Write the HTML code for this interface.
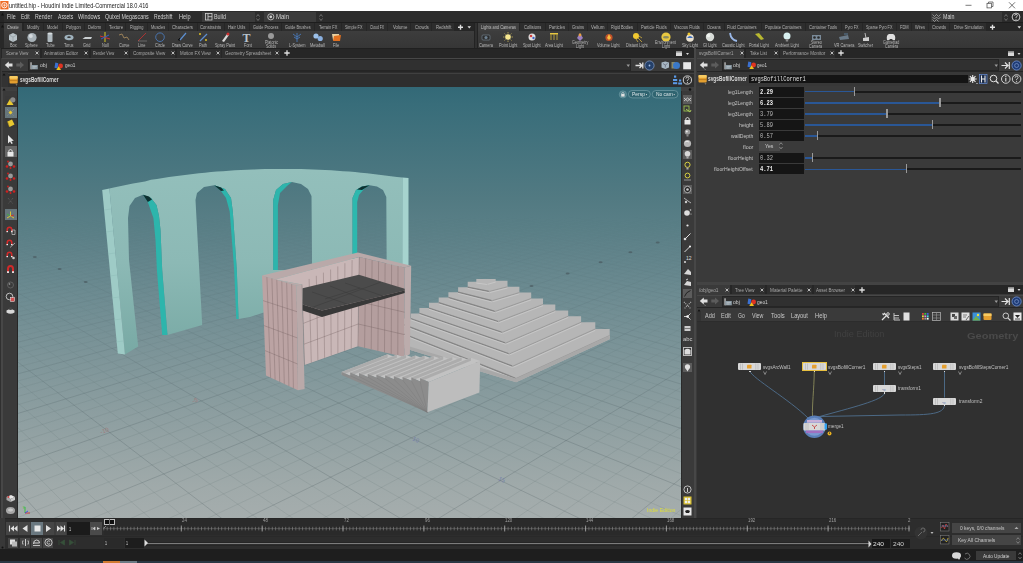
<!DOCTYPE html><html><head><meta charset="utf-8"><style>
*{margin:0;padding:0;box-sizing:border-box}
html,body{width:1023px;height:563px;overflow:hidden;background:#3a3a3a;font-family:"Liberation Sans",sans-serif}
.b{position:absolute}
.t{position:absolute;white-space:nowrap;line-height:1;transform-origin:0 0}
svg{position:absolute;overflow:visible}
</style></head><body><div class="b" style="left:0px;top:0px;width:1023px;height:11px;background:#ffffff;"></div><svg style="left:0px;top:0px" width="12" height="11" viewBox="0 0 12 11"><rect x="0.3" y="1" width="8.2" height="8.4" fill="#ef6a22"/><circle cx="4.4" cy="5.2" r="2.7" fill="none" stroke="#fff" stroke-width="0.9"/><path d="M2.5 5.2 H6.3 M4.4 3.3 V7" stroke="#fff" stroke-width="0.6"/></svg><div class="t" style="left:9.40px;top:2.90px;font-size:6.5px;font-family:'Liberation Sans',sans-serif;font-weight:normal;color:#202020;transform:scaleX(0.861);">untitled.hip - Houdini Indie Limited-Commercial 18.0.416</div><svg style="left:960px;top:0px" width="63" height="11" viewBox="0 0 63 11"><line x1="5.5" y1="5.3" x2="11.5" y2="5.3" stroke="#444" stroke-width="0.7"/><rect x="27" y="3.3" width="4.6" height="4.6" fill="none" stroke="#444" stroke-width="0.7"/><path d="M28.5 3.3 V2 H33 V6.5 H31.6" fill="none" stroke="#444" stroke-width="0.7"/><path d="M49 2.3 L55 8.3 M55 2.3 L49 8.3" stroke="#444" stroke-width="0.75"/></svg><div class="b" style="left:0px;top:11px;width:1023px;height:12px;background:#2c2c2c;"></div><div class="b" style="left:0px;top:11px;width:4px;height:12px;background:#262626;"></div><svg style="left:1px;top:13px" width="3" height="3" viewBox="0 0 3 3"><path d="M0 2.5 L1.5 0 L3 2.5Z" fill="#111"/></svg><div class="t" style="left:7.00px;top:13.57px;font-size:6.3px;font-family:'Liberation Sans',sans-serif;font-weight:normal;color:#d0d0d0;transform:scaleX(0.847);">File</div><div class="t" style="left:21.10px;top:13.57px;font-size:6.3px;font-family:'Liberation Sans',sans-serif;font-weight:normal;color:#d0d0d0;transform:scaleX(0.792);">Edit</div><div class="t" style="left:35.20px;top:13.57px;font-size:6.3px;font-family:'Liberation Sans',sans-serif;font-weight:normal;color:#d0d0d0;transform:scaleX(0.832);">Render</div><div class="t" style="left:57.60px;top:13.57px;font-size:6.3px;font-family:'Liberation Sans',sans-serif;font-weight:normal;color:#d0d0d0;transform:scaleX(0.804);">Assets</div><div class="t" style="left:77.90px;top:13.57px;font-size:6.3px;font-family:'Liberation Sans',sans-serif;font-weight:normal;color:#d0d0d0;transform:scaleX(0.873);">Windows</div><div class="t" style="left:104.90px;top:13.57px;font-size:6.3px;font-family:'Liberation Sans',sans-serif;font-weight:normal;color:#d0d0d0;transform:scaleX(0.845);">Quixel Megascans</div><div class="t" style="left:153.50px;top:13.57px;font-size:6.3px;font-family:'Liberation Sans',sans-serif;font-weight:normal;color:#d0d0d0;transform:scaleX(0.801);">Redshift</div><div class="t" style="left:178.50px;top:13.57px;font-size:6.3px;font-family:'Liberation Sans',sans-serif;font-weight:normal;color:#d0d0d0;transform:scaleX(0.888);">Help</div><div class="b" style="left:202px;top:11.6px;width:53px;height:10px;background:#3b3b3b;"></div><svg style="left:204.5px;top:13.3px" width="8" height="8" viewBox="0 0 8 8"><rect x="0.5" y="0.5" width="6.5" height="6.5" fill="none" stroke="#d0d0d0" stroke-width="0.8"/><line x1="3" y1="0.5" x2="3" y2="7" stroke="#d0d0d0" stroke-width="0.8"/><line x1="3" y1="3.7" x2="7" y2="3.7" stroke="#d0d0d0" stroke-width="0.8"/></svg><div class="t" style="left:214.00px;top:13.94px;font-size:6.8px;font-family:'Liberation Sans',sans-serif;font-weight:normal;color:#d0d0d0;transform:scaleX(0.794);">Build</div><svg style="left:255.5px;top:13.5px" width="4" height="7" viewBox="0 0 4 7"><path d="M0.5 2.5 L2 0.5 L3.5 2.5 M0.5 4.5 L2 6.5 L3.5 4.5" stroke="#888" stroke-width="0.7" fill="none"/></svg><div class="b" style="left:264.3px;top:11.6px;width:52px;height:10px;background:#3b3b3b;"></div><svg style="left:267.3px;top:13.3px" width="8" height="8" viewBox="0 0 8 8"><circle cx="3.8" cy="3.8" r="3.1" fill="none" stroke="#d0d0d0" stroke-width="0.8"/><circle cx="3.8" cy="3.8" r="1.4" fill="#d0d0d0"/></svg><div class="t" style="left:276.00px;top:13.94px;font-size:6.8px;font-family:'Liberation Sans',sans-serif;font-weight:normal;color:#d0d0d0;transform:scaleX(0.882);">Main</div><svg style="left:318.5px;top:13.5px" width="4" height="7" viewBox="0 0 4 7"><path d="M0.5 2.5 L2 0.5 L3.5 2.5 M0.5 4.5 L2 6.5 L3.5 4.5" stroke="#888" stroke-width="0.7" fill="none"/></svg><div class="b" style="left:930.7px;top:11.6px;width:71px;height:10px;background:#3b3b3b;"></div><svg style="left:932px;top:12.5px" width="9" height="9" viewBox="0 0 9 9"><path d="M0.5 1.5 L2.5 3.5 L4.5 1.5 L6.5 3.5 L8.5 1.5 M0.5 4 L2.5 6 L4.5 4 L6.5 6 L8.5 4 M0.5 6.5 L2.5 8.5 L4.5 6.5 L6.5 8.5" stroke="#c8c8c8" stroke-width="0.6" fill="none"/></svg><div class="t" style="left:942.50px;top:13.94px;font-size:6.8px;font-family:'Liberation Sans',sans-serif;font-weight:normal;color:#d0d0d0;transform:scaleX(0.780);">Main</div><svg style="left:1004px;top:13.5px" width="4" height="7" viewBox="0 0 4 7"><path d="M0.5 2.5 L2 0.5 L3.5 2.5 M0.5 4.5 L2 6.5 L3.5 4.5" stroke="#888" stroke-width="0.7" fill="none"/></svg><svg style="left:1011px;top:12px" width="11" height="10" viewBox="0 0 11 10"><circle cx="5" cy="5" r="3.9" fill="#2a2a2a" stroke="#d8d8d8" stroke-width="0.9"/><path d="M3.6 3.8 Q3.7 2.4 5 2.4 Q6.4 2.4 6.4 3.7 Q6.4 4.6 5 5.2 V6.2" stroke="#d8d8d8" stroke-width="0.8" fill="none"/><circle cx="5" cy="7.4" r="0.5" fill="#d8d8d8"/></svg><div class="b" style="left:0px;top:22px;width:1023px;height:1px;background:#1d1d1d;"></div><div class="b" style="left:0px;top:23px;width:1023px;height:8px;background:#262626;"></div><div class="b" style="left:0px;top:23px;width:4px;height:25px;background:#282828;"></div><svg style="left:1px;top:24.5px" width="3" height="3" viewBox="0 0 3 3"><path d="M0 2.5 L1.5 0 L3 2.5Z" fill="#111"/></svg><div class="b" style="left:4.4px;top:23.3px;width:17.900000000000002px;height:7.7px;background:#3f3f3f;"></div><div class="t" style="left:7.30px;top:24.91px;font-size:5.3px;font-family:'Liberation Sans',sans-serif;font-weight:normal;color:#c0c0c0;transform:scaleX(0.736);">Create</div><div class="b" style="left:23.5px;top:23.3px;width:19.3px;height:7.7px;background:#2d2d2d;"></div><div class="t" style="left:26.90px;top:24.91px;font-size:5.3px;font-family:'Liberation Sans',sans-serif;font-weight:normal;color:#b4b4b4;transform:scaleX(0.782);">Modify</div><div class="b" style="left:43.5px;top:23.3px;width:18.400000000000002px;height:7.7px;background:#2d2d2d;"></div><div class="t" style="left:46.90px;top:24.91px;font-size:5.3px;font-family:'Liberation Sans',sans-serif;font-weight:normal;color:#b4b4b4;transform:scaleX(0.748);">Model</div><div class="b" style="left:62.6px;top:23.3px;width:21.299999999999994px;height:7.7px;background:#2d2d2d;"></div><div class="t" style="left:65.50px;top:24.91px;font-size:5.3px;font-family:'Liberation Sans',sans-serif;font-weight:normal;color:#b4b4b4;transform:scaleX(0.768);">Polygon</div><div class="b" style="left:84.6px;top:23.3px;width:20.3px;height:7.7px;background:#2d2d2d;"></div><div class="t" style="left:87.80px;top:24.91px;font-size:5.3px;font-family:'Liberation Sans',sans-serif;font-weight:normal;color:#b4b4b4;transform:scaleX(0.760);">Deform</div><div class="b" style="left:105.6px;top:23.3px;width:19.700000000000006px;height:7.7px;background:#2d2d2d;"></div><div class="t" style="left:109.00px;top:24.91px;font-size:5.3px;font-family:'Liberation Sans',sans-serif;font-weight:normal;color:#b4b4b4;transform:scaleX(0.806);">Texture</div><div class="b" style="left:126px;top:23.3px;width:20.899999999999995px;height:7.7px;background:#2d2d2d;"></div><div class="t" style="left:129.60px;top:24.91px;font-size:5.3px;font-family:'Liberation Sans',sans-serif;font-weight:normal;color:#b4b4b4;transform:scaleX(0.746);">Rigging</div><div class="b" style="left:147.6px;top:23.3px;width:20.200000000000006px;height:7.7px;background:#2d2d2d;"></div><div class="t" style="left:150.80px;top:24.91px;font-size:5.3px;font-family:'Liberation Sans',sans-serif;font-weight:normal;color:#b4b4b4;transform:scaleX(0.731);">Muscles</div><div class="b" style="left:168.5px;top:23.3px;width:28.600000000000012px;height:7.7px;background:#2d2d2d;"></div><div class="t" style="left:172.00px;top:24.91px;font-size:5.3px;font-family:'Liberation Sans',sans-serif;font-weight:normal;color:#b4b4b4;transform:scaleX(0.810);">Characters</div><div class="b" style="left:197.8px;top:23.3px;width:26.49999999999999px;height:7.7px;background:#2d2d2d;"></div><div class="t" style="left:199.80px;top:24.91px;font-size:5.3px;font-family:'Liberation Sans',sans-serif;font-weight:normal;color:#b4b4b4;transform:scaleX(0.791);">Constraints</div><div class="b" style="left:225px;top:23.3px;width:23.899999999999995px;height:7.7px;background:#2d2d2d;"></div><div class="t" style="left:228.00px;top:24.91px;font-size:5.3px;font-family:'Liberation Sans',sans-serif;font-weight:normal;color:#b4b4b4;transform:scaleX(0.814);">Hair Utils</div><div class="b" style="left:249.6px;top:23.3px;width:31.700000000000006px;height:7.7px;background:#2d2d2d;"></div><div class="t" style="left:252.60px;top:24.91px;font-size:5.3px;font-family:'Liberation Sans',sans-serif;font-weight:normal;color:#b4b4b4;transform:scaleX(0.731);">Guide Process</div><div class="b" style="left:282px;top:23.3px;width:32.3px;height:7.7px;background:#2d2d2d;"></div><div class="t" style="left:285.40px;top:24.91px;font-size:5.3px;font-family:'Liberation Sans',sans-serif;font-weight:normal;color:#b4b4b4;transform:scaleX(0.730);">Guide Brushes</div><div class="b" style="left:315px;top:23.3px;width:25.8px;height:7.7px;background:#2d2d2d;"></div><div class="t" style="left:318.60px;top:24.91px;font-size:5.3px;font-family:'Liberation Sans',sans-serif;font-weight:normal;color:#b4b4b4;transform:scaleX(0.753);">Terrain FX</div><div class="b" style="left:341.5px;top:23.3px;width:24.8px;height:7.7px;background:#2d2d2d;"></div><div class="t" style="left:344.60px;top:24.91px;font-size:5.3px;font-family:'Liberation Sans',sans-serif;font-weight:normal;color:#b4b4b4;transform:scaleX(0.712);">Simple FX</div><div class="b" style="left:367px;top:23.3px;width:20.3px;height:7.7px;background:#2d2d2d;"></div><div class="t" style="left:369.90px;top:24.91px;font-size:5.3px;font-family:'Liberation Sans',sans-serif;font-weight:normal;color:#b4b4b4;transform:scaleX(0.638);">Cloud FX</div><div class="b" style="left:388px;top:23.3px;width:22.3px;height:7.7px;background:#2d2d2d;"></div><div class="t" style="left:392.70px;top:24.91px;font-size:5.3px;font-family:'Liberation Sans',sans-serif;font-weight:normal;color:#b4b4b4;transform:scaleX(0.809);">Volume</div><div class="b" style="left:411px;top:23.3px;width:20.3px;height:7.7px;background:#2d2d2d;"></div><div class="t" style="left:414.80px;top:24.91px;font-size:5.3px;font-family:'Liberation Sans',sans-serif;font-weight:normal;color:#b4b4b4;transform:scaleX(0.763);">Crowds</div><div class="b" style="left:432px;top:23.3px;width:22.3px;height:7.7px;background:#2d2d2d;"></div><div class="t" style="left:435.70px;top:24.91px;font-size:5.3px;font-family:'Liberation Sans',sans-serif;font-weight:normal;color:#b4b4b4;transform:scaleX(0.787);">Redshift</div><div class="b" style="left:477.7px;top:23.3px;width:41.60000000000001px;height:7.7px;background:#3f3f3f;"></div><div class="t" style="left:481.00px;top:24.91px;font-size:5.3px;font-family:'Liberation Sans',sans-serif;font-weight:normal;color:#c0c0c0;transform:scaleX(0.738);">Lights and Cameras</div><div class="b" style="left:520px;top:23.3px;width:25.3px;height:7.7px;background:#2d2d2d;"></div><div class="t" style="left:523.70px;top:24.91px;font-size:5.3px;font-family:'Liberation Sans',sans-serif;font-weight:normal;color:#b4b4b4;transform:scaleX(0.763);">Collisions</div><div class="b" style="left:546px;top:23.3px;width:22.3px;height:7.7px;background:#2d2d2d;"></div><div class="t" style="left:548.50px;top:24.91px;font-size:5.3px;font-family:'Liberation Sans',sans-serif;font-weight:normal;color:#b4b4b4;transform:scaleX(0.787);">Particles</div><div class="b" style="left:569px;top:23.3px;width:18.3px;height:7.7px;background:#2d2d2d;"></div><div class="t" style="left:572.00px;top:24.91px;font-size:5.3px;font-family:'Liberation Sans',sans-serif;font-weight:normal;color:#b4b4b4;transform:scaleX(0.769);">Grains</div><div class="b" style="left:588px;top:23.3px;width:19.3px;height:7.7px;background:#2d2d2d;"></div><div class="t" style="left:590.50px;top:24.91px;font-size:5.3px;font-family:'Liberation Sans',sans-serif;font-weight:normal;color:#b4b4b4;transform:scaleX(0.849);">Vellum</div><div class="b" style="left:608px;top:23.3px;width:28.8px;height:7.7px;background:#2d2d2d;"></div><div class="t" style="left:611.00px;top:24.91px;font-size:5.3px;font-family:'Liberation Sans',sans-serif;font-weight:normal;color:#b4b4b4;transform:scaleX(0.739);">Rigid Bodies</div><div class="b" style="left:637.5px;top:23.3px;width:32.8px;height:7.7px;background:#2d2d2d;"></div><div class="t" style="left:640.80px;top:24.91px;font-size:5.3px;font-family:'Liberation Sans',sans-serif;font-weight:normal;color:#b4b4b4;transform:scaleX(0.772);">Particle Fluids</div><div class="b" style="left:671px;top:23.3px;width:32.3px;height:7.7px;background:#2d2d2d;"></div><div class="t" style="left:673.60px;top:24.91px;font-size:5.3px;font-family:'Liberation Sans',sans-serif;font-weight:normal;color:#b4b4b4;transform:scaleX(0.760);">Viscous Fluids</div><div class="b" style="left:704px;top:23.3px;width:20.3px;height:7.7px;background:#2d2d2d;"></div><div class="t" style="left:706.90px;top:24.91px;font-size:5.3px;font-family:'Liberation Sans',sans-serif;font-weight:normal;color:#b4b4b4;transform:scaleX(0.745);">Oceans</div><div class="b" style="left:725px;top:23.3px;width:36.3px;height:7.7px;background:#2d2d2d;"></div><div class="t" style="left:727.40px;top:24.91px;font-size:5.3px;font-family:'Liberation Sans',sans-serif;font-weight:normal;color:#b4b4b4;transform:scaleX(0.767);">Fluid Containers</div><div class="b" style="left:762px;top:23.3px;width:43.3px;height:7.7px;background:#2d2d2d;"></div><div class="t" style="left:764.90px;top:24.91px;font-size:5.3px;font-family:'Liberation Sans',sans-serif;font-weight:normal;color:#b4b4b4;transform:scaleX(0.762);">Populate Containers</div><div class="b" style="left:806px;top:23.3px;width:35.3px;height:7.7px;background:#2d2d2d;"></div><div class="t" style="left:808.90px;top:24.91px;font-size:5.3px;font-family:'Liberation Sans',sans-serif;font-weight:normal;color:#b4b4b4;transform:scaleX(0.765);">Container Tools</div><div class="b" style="left:842px;top:23.3px;width:20.3px;height:7.7px;background:#2d2d2d;"></div><div class="t" style="left:844.50px;top:24.91px;font-size:5.3px;font-family:'Liberation Sans',sans-serif;font-weight:normal;color:#b4b4b4;transform:scaleX(0.705);">Pyro FX</div><div class="b" style="left:863px;top:23.3px;width:33.3px;height:7.7px;background:#2d2d2d;"></div><div class="t" style="left:865.60px;top:24.91px;font-size:5.3px;font-family:'Liberation Sans',sans-serif;font-weight:normal;color:#b4b4b4;transform:scaleX(0.706);">Sparse Pyro FX</div><div class="b" style="left:897px;top:23.3px;width:14.3px;height:7.7px;background:#2d2d2d;"></div><div class="t" style="left:899.80px;top:24.91px;font-size:5.3px;font-family:'Liberation Sans',sans-serif;font-weight:normal;color:#b4b4b4;transform:scaleX(0.758);">FDM</div><div class="b" style="left:912px;top:23.3px;width:16.3px;height:7.7px;background:#2d2d2d;"></div><div class="t" style="left:915.00px;top:24.91px;font-size:5.3px;font-family:'Liberation Sans',sans-serif;font-weight:normal;color:#b4b4b4;transform:scaleX(0.738);">Wires</div><div class="b" style="left:929px;top:23.3px;width:20.3px;height:7.7px;background:#2d2d2d;"></div><div class="t" style="left:932.00px;top:24.91px;font-size:5.3px;font-family:'Liberation Sans',sans-serif;font-weight:normal;color:#b4b4b4;transform:scaleX(0.779);">Crowds</div><div class="b" style="left:950px;top:23.3px;width:36.3px;height:7.7px;background:#2d2d2d;"></div><div class="t" style="left:953.50px;top:24.91px;font-size:5.3px;font-family:'Liberation Sans',sans-serif;font-weight:normal;color:#b4b4b4;transform:scaleX(0.765);">Drive Simulation</div><svg style="left:456.5px;top:24px" width="18" height="7" viewBox="0 0 18 7"><path d="M3.5 0.8 V5.8 M1 3.3 H6" stroke="#e0e0e0" stroke-width="1.4"/><path d="M10.5 2.3 L14 2.3 L12.25 4.6Z" fill="#e0e0e0"/></svg><svg style="left:988.5px;top:24px" width="34" height="7" viewBox="0 0 34 7"><path d="M3.5 0.8 V5.8 M1 3.3 H6" stroke="#e0e0e0" stroke-width="1.4"/><path d="M28.5 2.3 L32 2.3 L30.25 4.6Z" fill="#e0e0e0"/></svg><div class="b" style="left:474.2px;top:23px;width:4px;height:25px;background:#303030;border-left:1px solid #232323;border-right:1px solid #232323;"></div><div class="b" style="left:4px;top:31px;width:470px;height:17px;background:linear-gradient(#3d3d3d,#363636)"></div><div class="b" style="left:478px;top:31px;width:545px;height:17px;background:linear-gradient(#3d3d3d,#363636)"></div><div class="b" style="left:0px;top:47.6px;width:1023px;height:1px;background:#202020;"></div><svg style="left:7.199999999999999px;top:30.6px" width="12" height="12" viewBox="0 0 12 12"><path d="M2 4 L6 2 L10 4 L10 9 L6 11 L2 9Z" fill="#b9c3c8"/><path d="M2 4 L6 6 L10 4 M6 6 V11" stroke="#8a959a" stroke-width="0.6" fill="none"/></svg><div class="t" style="left:9.84px;top:42.91px;font-size:5.3px;font-family:'Liberation Sans',sans-serif;font-weight:normal;color:#b8b8b8;transform:scaleX(0.736);">Box</div><svg style="left:25.7px;top:30.6px" width="12" height="12" viewBox="0 0 12 12"><circle cx="6" cy="6.5" r="4.6" fill="#a8b2b8"/><circle cx="4.8" cy="5" r="2" fill="#d4dade"/></svg><div class="t" style="left:25.41px;top:42.91px;font-size:5.3px;font-family:'Liberation Sans',sans-serif;font-weight:normal;color:#b8b8b8;transform:scaleX(0.736);">Sphere</div><svg style="left:44.0px;top:30.6px" width="12" height="12" viewBox="0 0 12 12"><rect x="3.5" y="2" width="5" height="9" rx="1" fill="#b0bac0"/><ellipse cx="6" cy="2.5" rx="2.5" ry="1" fill="#d6dde0"/></svg><div class="t" style="left:45.63px;top:42.91px;font-size:5.3px;font-family:'Liberation Sans',sans-serif;font-weight:normal;color:#b8b8b8;transform:scaleX(0.736);">Tube</div><svg style="left:62.599999999999994px;top:30.6px" width="12" height="12" viewBox="0 0 12 12"><ellipse cx="6" cy="6.5" rx="4.5" ry="2.8" fill="#9fb2bd"/><ellipse cx="6" cy="6.2" rx="1.8" ry="0.9" fill="#3a3a3a"/></svg><div class="t" style="left:63.83px;top:42.91px;font-size:5.3px;font-family:'Liberation Sans',sans-serif;font-weight:normal;color:#b8b8b8;transform:scaleX(0.736);">Torus</div><svg style="left:80.7px;top:30.6px" width="12" height="12" viewBox="0 0 12 12"><path d="M1.5 8 L4 6 L11 6 L10 8 Z" fill="#c8cdd0"/></svg><div class="t" style="left:83.02px;top:42.91px;font-size:5.3px;font-family:'Liberation Sans',sans-serif;font-weight:normal;color:#b8b8b8;transform:scaleX(0.736);">Grid</div><svg style="left:99.0px;top:30.6px" width="12" height="12" viewBox="0 0 12 12"><line x1="6" y1="1" x2="6" y2="11" stroke="#d8c820" stroke-width="1"/><line x1="1" y1="5" x2="11" y2="8" stroke="#d03030" stroke-width="1"/><line x1="2" y1="8" x2="10" y2="4" stroke="#3060d0" stroke-width="1"/></svg><div class="t" style="left:101.64px;top:42.91px;font-size:5.3px;font-family:'Liberation Sans',sans-serif;font-weight:normal;color:#b8b8b8;transform:scaleX(0.736);">Null</div><svg style="left:118.0px;top:30.6px" width="12" height="12" viewBox="0 0 12 12"><path d="M1 4 L4 3 L6 7 L9 6 L11 9" stroke="#b09060" stroke-width="0.8" fill="none"/></svg><div class="t" style="left:118.80px;top:42.91px;font-size:5.3px;font-family:'Liberation Sans',sans-serif;font-weight:normal;color:#b8b8b8;transform:scaleX(0.736);">Curve</div><svg style="left:135.6px;top:30.6px" width="12" height="12" viewBox="0 0 12 12"><line x1="2" y1="10" x2="10" y2="2" stroke="#c83030" stroke-width="0.8"/><line x1="2" y1="10" x2="11" y2="10" stroke="#999" stroke-width="0.5"/></svg><div class="t" style="left:137.91px;top:42.91px;font-size:5.3px;font-family:'Liberation Sans',sans-serif;font-weight:normal;color:#b8b8b8;transform:scaleX(0.736);">Line</div><svg style="left:154.0px;top:30.6px" width="12" height="12" viewBox="0 0 12 12"><circle cx="6" cy="6.2" r="4.3" fill="none" stroke="#4a78b8" stroke-width="0.9"/></svg><div class="t" style="left:155.02px;top:42.91px;font-size:5.3px;font-family:'Liberation Sans',sans-serif;font-weight:normal;color:#b8b8b8;transform:scaleX(0.736);">Circle</div><svg style="left:176.3px;top:30.6px" width="12" height="12" viewBox="0 0 12 12"><path d="M2 9 L4 7 L3 10" stroke="#111" stroke-width="1" fill="none"/><line x1="4" y1="9" x2="10" y2="2" stroke="#5d8fd0" stroke-width="1.2"/></svg><div class="t" style="left:172.01px;top:42.91px;font-size:5.3px;font-family:'Liberation Sans',sans-serif;font-weight:normal;color:#b8b8b8;transform:scaleX(0.736);">Draw Curve</div><svg style="left:197.4px;top:30.6px" width="12" height="12" viewBox="0 0 12 12"><circle cx="3" cy="3" r="1" fill="#e0c020"/><circle cx="9" cy="9" r="1" fill="#e0c020"/><line x1="3" y1="10" x2="10" y2="3" stroke="#5d8fd0" stroke-width="1.2"/></svg><div class="t" style="left:199.39px;top:42.91px;font-size:5.3px;font-family:'Liberation Sans',sans-serif;font-weight:normal;color:#b8b8b8;transform:scaleX(0.736);">Path</div><svg style="left:219.4px;top:30.6px" width="12" height="12" viewBox="0 0 12 12"><path d="M3 10 L8 3 L10 4 L5 11Z" fill="#d8d8d8"/><circle cx="9" cy="3" r="1.5" fill="#d03030"/></svg><div class="t" style="left:215.32px;top:42.91px;font-size:5.3px;font-family:'Liberation Sans',sans-serif;font-weight:normal;color:#b8b8b8;transform:scaleX(0.736);">Spray Paint</div><svg style="left:241.4px;top:30.6px" width="12" height="12" viewBox="0 0 12 12"><text x="1.5" y="11" font-size="12" font-family="Liberation Serif" font-weight="bold" fill="#b8c4cc">T</text></svg><div class="t" style="left:243.50px;top:42.91px;font-size:5.3px;font-family:'Liberation Sans',sans-serif;font-weight:normal;color:#b8b8b8;transform:scaleX(0.736);">Font</div><svg style="left:330.3px;top:30.6px" width="12" height="12" viewBox="0 0 12 12"><path d="M2 3 L9 3 L10 9 L3 9Z" fill="#e8d0a0"/><path d="M4 5 L11 4 L10 10 L3 10Z" fill="#e07020"/></svg><div class="t" style="left:333.16px;top:42.91px;font-size:5.3px;font-family:'Liberation Sans',sans-serif;font-weight:normal;color:#b8b8b8;transform:scaleX(0.736);">File</div><svg style="left:291.0px;top:30.6px" width="12" height="12" viewBox="0 0 12 12"><path d="M6 11 V2 M6 6 L2 3 M6 6 L10 3 M6 8 L3 6 M6 8 L9 6" stroke="#4a80c8" stroke-width="0.8" fill="none"/></svg><div class="t" style="left:288.77px;top:42.91px;font-size:5.3px;font-family:'Liberation Sans',sans-serif;font-weight:normal;color:#b8b8b8;transform:scaleX(0.736);">L-System</div><svg style="left:311.8px;top:30.6px" width="12" height="12" viewBox="0 0 12 12"><circle cx="4" cy="5" r="2.6" fill="#9cc0e8"/><circle cx="8.2" cy="7.5" r="2.6" fill="#8ab0e0"/></svg><div class="t" style="left:310.43px;top:42.91px;font-size:5.3px;font-family:'Liberation Sans',sans-serif;font-weight:normal;color:#b8b8b8;transform:scaleX(0.736);">Metaball</div><svg style="left:265.2px;top:30.6px" width="12" height="12" viewBox="0 0 12 12"><circle cx="6" cy="5" r="3" fill="#9a9a9a"/></svg><svg style="left:480.2px;top:30.6px" width="12" height="12" viewBox="0 0 12 12"><rect x="2" y="4" width="8" height="5" rx="1" fill="#2c2c2c" stroke="#7a8a98" stroke-width="0.6"/><circle cx="6" cy="6.5" r="1.6" fill="#6d8090"/></svg><div class="t" style="left:479.27px;top:42.91px;font-size:5.3px;font-family:'Liberation Sans',sans-serif;font-weight:normal;color:#b8b8b8;transform:scaleX(0.736);">Camera</div><svg style="left:502.0px;top:30.6px" width="12" height="12" viewBox="0 0 12 12"><circle cx="6" cy="6" r="2.8" fill="#f8e890"/><path d="M6 1 V2.5 M6 9.5 V11 M1 6 H2.5 M9.5 6 H11 M2.5 2.5 L3.5 3.5 M8.5 8.5 L9.5 9.5 M9.5 2.5 L8.5 3.5 M2.5 9.5 L3.5 8.5" stroke="#e8d060" stroke-width="0.6"/></svg><div class="t" style="left:498.79px;top:42.91px;font-size:5.3px;font-family:'Liberation Sans',sans-serif;font-weight:normal;color:#b8b8b8;transform:scaleX(0.736);">Point Light</div><svg style="left:525.5px;top:30.6px" width="12" height="12" viewBox="0 0 12 12"><circle cx="6" cy="6" r="3.5" fill="#e0e0e0"/><circle cx="5" cy="5" r="1.3" fill="#d04040"/><circle cx="7.5" cy="7" r="1.2" fill="#4060c0"/></svg><div class="t" style="left:522.72px;top:42.91px;font-size:5.3px;font-family:'Liberation Sans',sans-serif;font-weight:normal;color:#b8b8b8;transform:scaleX(0.736);">Spot Light</div><svg style="left:547.5px;top:30.6px" width="12" height="12" viewBox="0 0 12 12"><rect x="2" y="2" width="8" height="1.5" fill="#e8c840"/><path d="M3 3.5 V9 M6 3.5 V9 M9 3.5 V9" stroke="#e8c840" stroke-width="0.7"/></svg><div class="t" style="left:544.61px;top:42.91px;font-size:5.3px;font-family:'Liberation Sans',sans-serif;font-weight:normal;color:#b8b8b8;transform:scaleX(0.736);">Area Light</div><svg style="left:574.0px;top:30.6px" width="12" height="12" viewBox="0 0 12 12"><path d="M6 2 L9 7 L6 10 L3 7Z" fill="#9a80c0"/><circle cx="6" cy="4" r="1.4" fill="#e8a040"/></svg><svg style="left:602.7px;top:30.6px" width="12" height="12" viewBox="0 0 12 12"><circle cx="6" cy="6.5" r="3.6" fill="#c0502a"/><path d="M6 3 L8 7 L6 9 L4 7Z" fill="#f8c040"/></svg><div class="t" style="left:597.43px;top:42.91px;font-size:5.3px;font-family:'Liberation Sans',sans-serif;font-weight:normal;color:#b8b8b8;transform:scaleX(0.736);">Volume Light</div><svg style="left:630.8px;top:30.6px" width="12" height="12" viewBox="0 0 12 12"><circle cx="5" cy="5" r="3" fill="#f0c830"/><path d="M7 7 L11 11 M8 5 L11 7 M5 8 L7 11" stroke="#e8c040" stroke-width="0.7"/></svg><div class="t" style="left:625.96px;top:42.91px;font-size:5.3px;font-family:'Liberation Sans',sans-serif;font-weight:normal;color:#b8b8b8;transform:scaleX(0.736);">Distant Light</div><svg style="left:659.7px;top:30.6px" width="12" height="12" viewBox="0 0 12 12"><circle cx="6" cy="6" r="4.6" fill="#e8c840"/><ellipse cx="6" cy="6.2" rx="3" ry="1.3" fill="#8a8a60"/></svg><svg style="left:684.3px;top:30.6px" width="12" height="12" viewBox="0 0 12 12"><circle cx="6" cy="7" r="3.8" fill="#e8e0d0"/><path d="M3 7 Q6 3 9 7" fill="#4070c0"/><circle cx="5" cy="3" r="1.5" fill="#f0c830"/></svg><div class="t" style="left:682.28px;top:42.91px;font-size:5.3px;font-family:'Liberation Sans',sans-serif;font-weight:normal;color:#b8b8b8;transform:scaleX(0.736);">Sky Light</div><svg style="left:704.3px;top:30.6px" width="12" height="12" viewBox="0 0 12 12"><circle cx="6" cy="6" r="4.2" fill="#d8dcd8"/><circle cx="4.5" cy="4.5" r="1.8" fill="#f0f4f0"/></svg><div class="t" style="left:703.47px;top:42.91px;font-size:5.3px;font-family:'Liberation Sans',sans-serif;font-weight:normal;color:#b8b8b8;transform:scaleX(0.736);">GI Light</div><svg style="left:727.3px;top:30.6px" width="12" height="12" viewBox="0 0 12 12"><path d="M3 2 Q4 9 10 10" stroke="#9ab8e8" stroke-width="1.8" fill="none"/></svg><div class="t" style="left:722.03px;top:42.91px;font-size:5.3px;font-family:'Liberation Sans',sans-serif;font-weight:normal;color:#b8b8b8;transform:scaleX(0.736);">Caustic Light</div><svg style="left:753.0px;top:30.6px" width="12" height="12" viewBox="0 0 12 12"><path d="M2 3 L8 9 L11 8 L6 2Z" fill="#b8b830"/></svg><div class="t" style="left:749.14px;top:42.91px;font-size:5.3px;font-family:'Liberation Sans',sans-serif;font-weight:normal;color:#b8b8b8;transform:scaleX(0.736);">Portal Light</div><svg style="left:781.0px;top:30.6px" width="12" height="12" viewBox="0 0 12 12"><circle cx="6" cy="5" r="3.5" fill="#d8f0f0"/><rect x="4.8" y="8" width="2.4" height="2.5" fill="#888"/></svg><div class="t" style="left:775.08px;top:42.91px;font-size:5.3px;font-family:'Liberation Sans',sans-serif;font-weight:normal;color:#b8b8b8;transform:scaleX(0.736);">Ambient Light</div><svg style="left:838.0px;top:30.6px" width="12" height="12" viewBox="0 0 12 12"><path d="M1 6 L10 4 L11 8 L2 9Z" fill="#6a7a88"/><rect x="6" y="2" width="4" height="2" fill="#4a5a68"/></svg><div class="t" style="left:833.81px;top:42.91px;font-size:5.3px;font-family:'Liberation Sans',sans-serif;font-weight:normal;color:#b8b8b8;transform:scaleX(0.736);">VR Camera</div><svg style="left:859.6px;top:30.6px" width="12" height="12" viewBox="0 0 12 12"><path d="M3 7 L9 6 L9 10 L3 10Z" fill="#d0d0d0"/><line x1="6" y1="7" x2="5" y2="2" stroke="#bbb" stroke-width="1"/></svg><div class="t" style="left:858.12px;top:42.91px;font-size:5.3px;font-family:'Liberation Sans',sans-serif;font-weight:normal;color:#b8b8b8;transform:scaleX(0.736);">Switcher</div><svg style="left:810.0px;top:30.6px" width="12" height="12" viewBox="0 0 12 12"><rect x="2" y="4" width="9" height="5" fill="#7a8a98"/><circle cx="4.5" cy="6.5" r="1.3" fill="#2a2a2a"/><circle cx="8.5" cy="6.5" r="1.3" fill="#2a2a2a"/></svg><svg style="left:885.4px;top:30.6px" width="12" height="12" viewBox="0 0 12 12"><path d="M2 9 Q1 4 4 3 H8 Q11 4 10 9 Q8 10 7 8 H5 Q4 10 2 9Z" fill="#e0e0e0"/></svg><div class="t" style="left:264.62px;top:39.57px;font-size:5.0px;font-family:'Liberation Sans',sans-serif;font-weight:normal;color:#b8b8b8;transform:scaleX(0.740);">Platonic</div><div class="t" style="left:266.16px;top:43.57px;font-size:5.0px;font-family:'Liberation Sans',sans-serif;font-weight:normal;color:#b8b8b8;transform:scaleX(0.740);">Solids</div><div class="t" style="left:571.88px;top:39.57px;font-size:5.0px;font-family:'Liberation Sans',sans-serif;font-weight:normal;color:#b8b8b8;transform:scaleX(0.740);">Geometry</div><div class="t" style="left:575.99px;top:43.57px;font-size:5.0px;font-family:'Liberation Sans',sans-serif;font-weight:normal;color:#b8b8b8;transform:scaleX(0.740);">Light</div><div class="t" style="left:655.32px;top:39.57px;font-size:5.0px;font-family:'Liberation Sans',sans-serif;font-weight:normal;color:#b8b8b8;transform:scaleX(0.740);">Environment</div><div class="t" style="left:661.69px;top:43.57px;font-size:5.0px;font-family:'Liberation Sans',sans-serif;font-weight:normal;color:#b8b8b8;transform:scaleX(0.740);">Light</div><div class="t" style="left:810.55px;top:39.57px;font-size:5.0px;font-family:'Liberation Sans',sans-serif;font-weight:normal;color:#b8b8b8;transform:scaleX(0.740);">Stereo</div><div class="t" style="left:809.42px;top:43.57px;font-size:5.0px;font-family:'Liberation Sans',sans-serif;font-weight:normal;color:#b8b8b8;transform:scaleX(0.740);">Camera</div><div class="t" style="left:883.28px;top:39.57px;font-size:5.0px;font-family:'Liberation Sans',sans-serif;font-weight:normal;color:#b8b8b8;transform:scaleX(0.740);">Gamepad</div><div class="t" style="left:884.82px;top:43.57px;font-size:5.0px;font-family:'Liberation Sans',sans-serif;font-weight:normal;color:#b8b8b8;transform:scaleX(0.740);">Camera</div><div class="b" style="left:0px;top:48.5px;width:694px;height:9.5px;background:#262626;"></div><div class="b" style="left:0px;top:48px;width:1.2px;height:470px;background:#303030;"></div><div class="b" style="left:1.5px;top:48.6px;width:38.9px;height:9.4px;background:#3a3a3a;"></div><div class="t" style="left:6.40px;top:50.84px;font-size:5.5px;font-family:'Liberation Sans',sans-serif;font-weight:normal;color:#a8a8a8;transform:scaleX(0.774);">Scene View</div><svg style="left:35.3px;top:51.3px" width="4" height="4" viewBox="0 0 4 4"><path d="M0.6 0.6 L3.4 3.4 M3.4 0.6 L0.6 3.4" stroke="#e8e8e8" stroke-width="0.75"/></svg><div class="b" style="left:41.5px;top:48.6px;width:47.9px;height:9.4px;background:#2e2e2e;"></div><div class="t" style="left:43.90px;top:50.84px;font-size:5.5px;font-family:'Liberation Sans',sans-serif;font-weight:normal;color:#a8a8a8;transform:scaleX(0.845);">Animation Editor</div><svg style="left:83.7px;top:51.3px" width="4" height="4" viewBox="0 0 4 4"><path d="M0.6 0.6 L3.4 3.4 M3.4 0.6 L0.6 3.4" stroke="#e8e8e8" stroke-width="0.75"/></svg><div class="b" style="left:90.5px;top:48.6px;width:38.4px;height:9.4px;background:#2e2e2e;"></div><div class="t" style="left:92.50px;top:50.84px;font-size:5.5px;font-family:'Liberation Sans',sans-serif;font-weight:normal;color:#a8a8a8;transform:scaleX(0.679);">Render View</div><svg style="left:123.8px;top:51.3px" width="4" height="4" viewBox="0 0 4 4"><path d="M0.6 0.6 L3.4 3.4 M3.4 0.6 L0.6 3.4" stroke="#e8e8e8" stroke-width="0.75"/></svg><div class="b" style="left:130px;top:48.6px;width:45.4px;height:9.4px;background:#2e2e2e;"></div><div class="t" style="left:133.00px;top:50.84px;font-size:5.5px;font-family:'Liberation Sans',sans-serif;font-weight:normal;color:#a8a8a8;transform:scaleX(0.815);">Composite View</div><svg style="left:170.7px;top:51.3px" width="4" height="4" viewBox="0 0 4 4"><path d="M0.6 0.6 L3.4 3.4 M3.4 0.6 L0.6 3.4" stroke="#e8e8e8" stroke-width="0.75"/></svg><div class="b" style="left:176.5px;top:48.6px;width:44.4px;height:9.4px;background:#2e2e2e;"></div><div class="t" style="left:179.90px;top:50.84px;font-size:5.5px;font-family:'Liberation Sans',sans-serif;font-weight:normal;color:#a8a8a8;transform:scaleX(0.802);">Motion FX View</div><svg style="left:216px;top:51.3px" width="4" height="4" viewBox="0 0 4 4"><path d="M0.6 0.6 L3.4 3.4 M3.4 0.6 L0.6 3.4" stroke="#e8e8e8" stroke-width="0.75"/></svg><div class="b" style="left:222px;top:48.6px;width:58.4px;height:9.4px;background:#2e2e2e;"></div><div class="t" style="left:225.00px;top:50.84px;font-size:5.5px;font-family:'Liberation Sans',sans-serif;font-weight:normal;color:#a8a8a8;transform:scaleX(0.813);">Geometry Spreadsheet</div><svg style="left:275.2px;top:51.3px" width="4" height="4" viewBox="0 0 4 4"><path d="M0.6 0.6 L3.4 3.4 M3.4 0.6 L0.6 3.4" stroke="#e8e8e8" stroke-width="0.75"/></svg><svg style="left:283.5px;top:50px" width="6" height="6" viewBox="0 0 6 6"><path d="M3 0.3 V5.7 M0.3 3 H5.7" stroke="#e0e0e0" stroke-width="1.3"/></svg><svg style="left:675px;top:50.5px" width="16" height="6" viewBox="0 0 16 6"><rect x="1" y="0.5" width="6" height="4.5" fill="#d8d8d8"/><rect x="1" y="0.5" width="6" height="1.2" fill="#999"/><path d="M11 2 L14 2 L12.5 4Z" fill="#d8d8d8"/></svg><div class="b" style="left:1.5px;top:58px;width:692.5px;height:14px;background:#3a3a3a;"></div><div class="b" style="left:1.5px;top:58px;width:692.5px;height:0.8px;background:#474747;"></div><div class="b" style="left:1.5px;top:71.2px;width:692.5px;height:0.8px;background:#262626;"></div><svg style="left:4px;top:60px" width="22" height="11" viewBox="0 0 22 11"><path d="M0.8 5 L4.8 1.5 V3.6 H8.5 V6.4 H4.8 V8.5Z" fill="#e0e0e0"/><path d="M5.5 8.5 L6.5 10" stroke="#aaa" stroke-width="0.6"/><path d="M20 5 L16 1.5 V3.6 H12.3 V6.4 H16 V8.5Z" fill="#5c5c5c"/></svg><div class="b" style="left:28px;top:59.3px;width:603px;height:11.4px;background:#303030;border:0.8px solid #252525;"></div><svg style="left:30px;top:61.8px" width="10" height="8" viewBox="0 0 10 8"><rect x="0.3" y="0.3" width="1.5" height="7" fill="#b0b0b0"/><rect x="1.3" y="3" width="6.5" height="4.3" fill="#8a9aa4"/><path d="M2.5 4.6 H6.8 M2.5 6 H5.5" stroke="#d8d8d8" stroke-width="0.5"/></svg><div class="t" style="left:40.00px;top:62.25px;font-size:6.2px;font-family:'Liberation Sans',sans-serif;font-weight:normal;color:#d0d0d0;transform:scaleX(0.834);">obj</div><svg style="left:54px;top:60.5px" width="12" height="10" viewBox="0 0 12 10"><path d="M1.3 1.5 L4.3 2.2 L3.5 7.5 L0.5 6.8Z" fill="#3b70d0"/><circle cx="6.6" cy="5" r="2.4" fill="#e03322"/><path d="M2.3 9 L4.6 5.2 L7 9Z" fill="#f2c21c"/></svg><div class="t" style="left:64.50px;top:62.25px;font-size:6.2px;font-family:'Liberation Sans',sans-serif;font-weight:normal;color:#d0d0d0;transform:scaleX(0.747);">geo1</div><svg style="left:625.5px;top:62.5px" width="5" height="5" viewBox="0 0 5 5"><path d="M0.5 1.5 L4 1.5 L2.25 4Z" fill="#9a9a9a"/></svg><svg style="left:634px;top:58.6px" width="60" height="13" viewBox="0 0 60 13"><path d="M1.5 6.5 H7.5 M5.5 4 L8 6.5 L5.5 9 M8.8 3.5 V9.5" stroke="#e0e0e0" stroke-width="1.3" fill="none"/><circle cx="15.5" cy="6.5" r="4.6" fill="#24406a" stroke="#8098c0" stroke-width="0.8"/><circle cx="15.5" cy="6.5" r="0.9" fill="#a8c0e8"/><path d="M27.5 3.5 L31.3 2.5 L35 3.5 V8.5 L31.3 10 L27.5 8.5Z" fill="#a8b8c4"/><path d="M29 4.5 L31.3 6 L33.5 4.5 M31.3 6 V8.5" stroke="#556" stroke-width="0.6" fill="none"/><rect x="37.5" y="3" width="4" height="6.5" fill="#8a8a6a"/><circle cx="42.5" cy="6.5" r="3.5" fill="#3a78c8"/><rect x="49.2" y="3.2" width="7.8" height="7.1" fill="#e8e8e8"/></svg><div class="b" style="left:1.5px;top:72px;width:692.5px;height:15.5px;background:#2e2e2e;"></div><div class="b" style="left:1.5px;top:72.8px;width:692.5px;height:0.9px;background:#404040;"></div><div class="b" style="left:1.5px;top:72px;width:6.5px;height:15.5px;background:#333333;"></div><svg style="left:1.5px;top:73px" width="4" height="3" viewBox="0 0 4 3"><path d="M0.5 2.5 L2 0.3 L3.5 2.5Z" fill="#111"/></svg><svg style="left:9px;top:74.5px" width="10" height="11" viewBox="0 0 10 11"><rect x="0.5" y="1" width="8.2" height="7.5" rx="1" fill="#e5a030"/><rect x="0.5" y="1" width="8.2" height="2.8" rx="0.8" fill="#f7cb62"/><line x1="0.5" y1="5.6" x2="8.7" y2="5.6" stroke="#a76a14" stroke-width="0.6"/><path d="M6.5 9.5 L8.5 9.5 L7.5 10.5Z" fill="#aaa"/></svg><div class="t" style="left:19.90px;top:77.17px;font-size:6.3px;font-family:'Liberation Sans',sans-serif;font-weight:bold;color:#dcdcdc;transform:scaleX(0.760);">svgsBofillCorner</div><svg style="left:670.5px;top:74px" width="36" height="12" viewBox="0 0 36 12"><rect x="3" y="1.5" width="2.2" height="2.2" fill="#5b9be8"/><rect x="2" y="5" width="4.2" height="2" fill="#5b9be8"/><rect x="2" y="8.2" width="4.2" height="2" fill="#5b9be8"/><rect x="8" y="5.5" width="2.2" height="2" fill="#5b9be8"/><rect x="7.2" y="8.5" width="3.8" height="2" fill="#5b9be8"/><circle cx="16.4" cy="6" r="4.1" fill="none" stroke="#e0e0e0" stroke-width="0.9"/><path d="M14.9 4.7 Q15 3.2 16.4 3.2 Q17.9 3.2 17.9 4.5 Q17.9 5.5 16.4 6.2 V7.2" stroke="#e0e0e0" stroke-width="0.8" fill="none"/><circle cx="16.4" cy="8.6" r="0.55" fill="#e0e0e0"/></svg><div class="b" style="left:1.5px;top:87px;width:16.5px;height:431px;background:#3a3a3a;"></div><div class="b" style="left:17.3px;top:87px;width:1px;height:431px;background:#262626;"></div><div class="b" style="left:1.2px;top:87px;width:1.8px;height:431px;background:#474747;"></div><div class="b" style="left:3px;top:87px;width:14.3px;height:3.5px;background:#404040;"></div><svg style="left:1.5px;top:87.5px" width="4" height="3" viewBox="0 0 4 3"><path d="M0.5 2.5 L2 0.3 L3.5 2.5Z" fill="#111"/></svg><div class="b" style="left:4.5px;top:95.7px;width:12.8px;height:31.9px;background:#383838;"></div><svg style="left:5.4px;top:95.5px" width="11" height="10.5" viewBox="0 0 11 10.5"><path d="M1.5 9 L5 3 L8.5 9Z" fill="#e8c830"/><circle cx="7.8" cy="3.8" r="2.6" fill="#8a8a8a"/></svg><div class="b" style="left:5px;top:106.5px;width:11.8px;height:11px;background:#66767c;"></div><svg style="left:5.4px;top:106.8px" width="11" height="10.5" viewBox="0 0 11 10.5"><path d="M2 2 L9 9 M9 2 L2 9" stroke="#999" stroke-width="0.8" stroke-dasharray="1 1"/><path d="M5.5 3.5 L7.5 5.5 L5.5 7.5 L3.5 5.5Z" fill="#e8c830"/></svg><svg style="left:5.4px;top:117.5px" width="11" height="10.5" viewBox="0 0 11 10.5"><path d="M2.5 3.5 L7 1.5 L9.5 6.5 L4.5 9Z" fill="#e8c830"/><path d="M2.5 3.5 L4.5 9" stroke="#b89820" stroke-width="0.6"/></svg><svg style="left:5.4px;top:133.8px" width="11" height="10.5" viewBox="0 0 11 10.5"><path d="M3 1 L3 9.5 L5 7.5 L6.5 10 L7.8 9.3 L6.3 7 L8.8 6.8Z" fill="#e8e8e8"/></svg><div class="b" style="left:5px;top:146.3px;width:11.8px;height:11px;background:#666;"></div><svg style="left:5.4px;top:146.60000000000002px" width="11" height="10.5" viewBox="0 0 11 10.5"><rect x="2.5" y="5" width="6" height="4.5" fill="#e8e8e8"/><path d="M3.8 5 V3.5 Q5.5 1.5 7.2 3.5 V5" stroke="#e8e8e8" stroke-width="0.9" fill="none"/></svg><svg style="left:5.4px;top:158.60000000000002px" width="11" height="10.5" viewBox="0 0 11 10.5"><circle cx="5.5" cy="5" r="2.4" fill="#9a9a9a"/><circle cx="2" cy="7.5" r="1.3" fill="#d02020"/><circle cx="9" cy="7.5" r="1.3" fill="#d02020"/><circle cx="5.5" cy="9" r="1" fill="#d02020"/><circle cx="3" cy="2.5" r="0.9" fill="#d02020"/></svg><svg style="left:5.4px;top:171.10000000000002px" width="11" height="10.5" viewBox="0 0 11 10.5"><circle cx="5.5" cy="5" r="2.4" fill="#9a9a9a"/><circle cx="2" cy="7.5" r="1.3" fill="#d02020"/><circle cx="9" cy="7.5" r="1.3" fill="#d02020"/><circle cx="5.5" cy="9" r="1" fill="#d02020"/><circle cx="3" cy="2.5" r="0.9" fill="#d02020"/></svg><svg style="left:5.4px;top:183.9px" width="11" height="10.5" viewBox="0 0 11 10.5"><circle cx="5.5" cy="5" r="2.4" fill="#9a9a9a"/><circle cx="2" cy="7.5" r="1.3" fill="#d02020"/><circle cx="9" cy="7.5" r="1.3" fill="#d02020"/><circle cx="5.5" cy="9" r="1" fill="#d02020"/><circle cx="3" cy="2.5" r="0.9" fill="#d02020"/></svg><svg style="left:5.4px;top:196.0px" width="11" height="10.5" viewBox="0 0 11 10.5"><path d="M3 2 L8 8 M8 2 L3 8" stroke="#666" stroke-width="0.8" stroke-dasharray="1 1"/></svg><div class="b" style="left:5px;top:209.2px;width:11.8px;height:11px;background:#66767c;"></div><svg style="left:5.4px;top:209.5px" width="11" height="10.5" viewBox="0 0 11 10.5"><path d="M5.5 1.5 V6 L2 8 M5.5 6 L9 8" stroke="#e8c830" stroke-width="0.9" fill="none"/><path d="M2 4 L5 6" stroke="#40b040" stroke-width="1"/><path d="M6 6 L9 5" stroke="#d03030" stroke-width="1"/></svg><svg style="left:5.4px;top:225.10000000000002px" width="11" height="10.5" viewBox="0 0 11 10.5"><path d="M1.5 7 V4.5 Q1.5 1.5 4.5 1.5 Q7.5 1.5 7.5 4.5 V7 H6 V4.5 Q6 3 4.5 3 Q3 3 3 4.5 V7Z" fill="#d02a2a"/><rect x="1.5" y="6" width="1.5" height="1.2" fill="#eee"/><rect x="6" y="6" width="1.5" height="1.2" fill="#eee"/><path d="M7 5 H10 V9.5 H7Z" fill="none" stroke="#ddd" stroke-width="0.6"/></svg><svg style="left:5.4px;top:237.60000000000002px" width="11" height="10.5" viewBox="0 0 11 10.5"><path d="M1.5 7 V4.5 Q1.5 1.5 4.5 1.5 Q7.5 1.5 7.5 4.5 V7 H6 V4.5 Q6 3 4.5 3 Q3 3 3 4.5 V7Z" fill="#d02a2a"/><rect x="1.5" y="6" width="1.5" height="1.2" fill="#eee"/><rect x="6" y="6" width="1.5" height="1.2" fill="#eee"/><path d="M5 9.5 L10 5" stroke="#ddd" stroke-width="0.6"/></svg><svg style="left:5.4px;top:250.4px" width="11" height="10.5" viewBox="0 0 11 10.5"><path d="M1.5 7 V4.5 Q1.5 1.5 4.5 1.5 Q7.5 1.5 7.5 4.5 V7 H6 V4.5 Q6 3 4.5 3 Q3 3 3 4.5 V7Z" fill="#d02a2a"/><rect x="1.5" y="6" width="1.5" height="1.2" fill="#eee"/><rect x="6" y="6" width="1.5" height="1.2" fill="#eee"/><circle cx="8.5" cy="8" r="1.3" fill="#ccc"/></svg><svg style="left:5.4px;top:263.90000000000003px" width="11" height="10.5" viewBox="0 0 11 10.5"><path d="M2 8.5 V5 Q2 1 5.5 1 Q9 1 9 5 V8.5 H7 V5 Q7 3 5.5 3 Q4 3 4 5 V8.5Z" fill="#d02a2a"/><rect x="2" y="7.3" width="2" height="1.6" fill="#eee"/><rect x="7" y="7.3" width="2" height="1.6" fill="#eee"/></svg><svg style="left:5.4px;top:280.2px" width="11" height="10.5" viewBox="0 0 11 10.5"><circle cx="5.5" cy="5" r="3" fill="#3a3a3a" stroke="#777" stroke-width="0.6"/><circle cx="4.5" cy="4" r="0.8" fill="#aaa"/></svg><svg style="left:5.4px;top:292.3px" width="11" height="10.5" viewBox="0 0 11 10.5"><circle cx="4.5" cy="4.5" r="3.3" fill="none" stroke="#ddd" stroke-width="0.8"/><rect x="5.5" y="5.5" width="4" height="4" fill="#d05050" stroke="#eee" stroke-width="0.5"/></svg><svg style="left:5.4px;top:305.1px" width="11" height="10.5" viewBox="0 0 11 10.5"><path d="M1.5 5.5 Q5.5 3 9.5 5.5 V7.5 Q5.5 10 1.5 7.5Z" fill="#d8d8d8"/><circle cx="5.5" cy="3.5" r="1.5" fill="#444"/></svg><svg style="left:5.4px;top:493.3px" width="11" height="10.5" viewBox="0 0 11 10.5"><path d="M1.5 4 L6 2 L10 4 L5.5 6Z" fill="#e8e8e8"/><path d="M1.5 4 V7 L5.5 9 V6Z" fill="#a8a8a8"/><path d="M5.5 6 V9 L10 7 V4Z" fill="#c8c8c8"/><circle cx="3.5" cy="4" r="1" fill="#d04040"/></svg><svg style="left:5.4px;top:505.1px" width="11" height="10.5" viewBox="0 0 11 10.5"><ellipse cx="5.5" cy="5.5" rx="4.5" ry="3.5" fill="#a8a8a8"/><ellipse cx="5.5" cy="5" rx="3" ry="2" fill="#c8c8c8" stroke="#888" stroke-width="0.5"/></svg><div class="b" style="left:18px;top:87.3px;width:663px;height:430.7px;background:linear-gradient(#336977 0%,#386d7a 4%,#527a82 26%,#6e8c92 49%,#869a9d 70%,#a0aaaa 93%,#a5adad 100%)"></div><svg style="left:0;top:0" width="1023" height="563" viewBox="0 0 1023 563"><defs><clipPath id="vpc"><rect x="18" y="87.3" width="663" height="430.7"/></clipPath><linearGradient id="gfade" x1="0" y1="0" x2="0" y2="1" gradientUnits="userSpaceOnUse"><stop offset="0" stop-color="#fff" stop-opacity="0"/></linearGradient><linearGradient id="fadeg" gradientUnits="userSpaceOnUse" x1="0" y1="215" x2="0" y2="430"><stop offset="0" stop-color="#fff" stop-opacity="0"/><stop offset="1" stop-color="#fff" stop-opacity="1"/></linearGradient><mask id="fm"><rect x="0" y="0" width="1023" height="563" fill="url(#fadeg)"/></mask></defs><g clip-path="url(#vpc)"><g mask="url(#fm)"><path d="M-1084.0 350.7L-5603.3 2181.2M-1128.3 359.6L347.5 166.7M-1052.4 346.6L-5441.1 2180.5M-1140.5 364.4L351.7 167.3M-1021.6 342.7L-5278.9 2179.8M-1153.1 369.3L355.9 167.9M-991.7 338.8L-5116.7 2179.1M-1166.1 374.4L360.2 168.6M-934.2 331.4L-4792.2 2177.7M-1193.4 385.1L368.9 169.8M-906.6 327.8L-4630.0 2177.0M-1207.7 390.8L373.4 170.5M-879.7 324.3L-4467.8 2176.3M-1222.6 396.6L377.9 171.1M-853.4 320.9L-4305.6 2175.6M-1238.1 402.7L382.4 171.8M-802.9 314.4L-3981.2 2174.2M-1270.7 415.5L391.7 173.1M-778.5 311.2L-3819.0 2173.5M-1287.9 422.3L396.4 173.8M-754.8 308.2L-3656.8 2172.8M-1305.8 429.3L401.2 174.5M-731.6 305.2L-3494.6 2172.1M-1324.5 436.6L406.0 175.2M-686.8 299.4L-3170.1 2170.7M-1364.0 452.2L415.9 176.6M-665.2 296.6L-3007.9 2170.0M-1385.1 460.5L420.9 177.4M-644.1 293.8L-2845.7 2169.3M-1407.1 469.1L426.0 178.1M-623.4 291.2L-2683.5 2168.6M-1430.0 478.1L431.2 178.8M-583.5 286.0L-2359.1 2167.2M-1479.1 497.4L441.7 180.4M-564.1 283.5L-2196.9 2166.5M-1505.4 507.7L447.1 181.1M-545.2 281.1L-2034.7 2165.8M-1532.9 518.6L452.5 181.9M-526.7 278.7L-1872.5 2165.1M-1561.9 529.9L458.0 182.7M-490.9 274.0L-1548.0 2163.7M-1624.3 554.5L469.3 184.3M-473.5 271.8L-1385.8 2163.0M-1658.1 567.8L475.0 185.2M-456.5 269.6L-1223.6 2162.3M-1693.7 581.7L480.8 186.0M-439.8 267.4L-1061.4 2161.6M-1731.3 596.5L486.7 186.9M-407.4 263.2L-737.0 2160.2M-1813.4 628.8L498.7 188.6M-391.7 261.2L-574.8 2159.5M-1858.3 646.5L504.9 189.5M-376.3 259.2L-412.6 2158.8M-1906.1 665.2L511.1 190.4M-361.2 257.3L-250.4 2158.1M-1957.1 685.3L517.4 191.3M-331.9 253.5L74.1 2156.7M-2069.9 729.6L530.4 193.2M-317.6 251.6L236.3 2156.0M-2132.5 754.2L537.0 194.1M-303.6 249.8L398.5 2155.3M-2200.0 780.7L543.7 195.1M-289.9 248.0L560.7 2154.6M-2272.8 809.3L550.5 196.1M-263.1 244.6L885.1 2153.2M-2437.4 874.0L564.4 198.1M-250.1 242.9L1047.3 2152.5M-2530.9 910.7L571.5 199.1M-237.3 241.2L1209.5 2151.8M-2633.2 951.0L578.7 200.2M-224.7 239.6L1371.7 2151.1M-2745.7 995.2L586.0 201.2M-200.3 236.4L1696.2 2149.7M-3008.0 1098.3L601.0 203.4M-188.3 234.9L1858.4 2149.0M-3162.2 1158.9L608.7 204.5M-176.6 233.4L2020.6 2148.3M-3335.6 1227.0L616.5 205.6M-165.1 231.9L2182.8 2147.6M-3531.9 1304.1L624.4 206.8M-142.6 229.0L2507.2 2146.2M-4014.5 1493.8L640.7 209.1M-131.6 227.6L2669.4 2145.5M-4315.7 1612.2L649.0 210.3M-120.9 226.2L2831.6 2144.8M-4671.2 1751.9L657.4 211.6M-110.2 224.8L2993.8 2144.1M-5097.1 1919.2L666.0 212.8M-89.5 222.1L3318.3 2142.7M-5632.6 2181.3L683.7 215.4M-79.4 220.8L3480.5 2142.0M-5455.1 2180.6L692.7 216.7M-69.5 219.5L3642.7 2141.3M-5277.7 2179.8L701.9 218.0M-59.7 218.2L3804.9 2140.6M-5100.2 2179.0L711.3 219.4M-40.5 215.8L4129.3 2139.2M-4745.4 2177.5L730.5 222.1M-31.1 214.6L4291.5 2138.5M-4567.9 2176.7L740.4 223.6M-21.9 213.4L4453.7 2137.9M-4390.5 2176.0L750.4 225.0M-12.8 212.2L4615.9 2137.2M-4213.1 2175.2L760.6 226.5M4.9 209.9L4940.4 2135.8M-3858.2 2173.7L781.7 229.5M13.6 208.8L5102.6 2135.1M-3680.7 2172.9L792.5 231.1M22.2 207.7L5264.8 2134.4M-3503.3 2172.1L803.5 232.7M30.6 206.6L5427.0 2133.7M-3325.9 2171.4L814.7 234.3M47.1 204.4L5644.3 2096.1M-2971.0 2169.9L837.8 237.7M55.2 203.4L5234.1 1907.9M-2793.6 2169.1L849.7 239.4M63.2 202.4L4893.2 1751.5M-2616.1 2168.3L861.8 241.1M71.1 201.3L4605.3 1619.5M-2438.7 2167.6L874.2 242.9M86.5 199.4L4146.0 1408.8M-2083.8 2166.0L899.7 246.6M94.0 198.4L3959.8 1323.4M-1906.4 2165.3L912.8 248.5M101.5 197.4L3795.7 1248.2M-1728.9 2164.5L926.2 250.4M108.8 196.5L3650.1 1181.3M-1551.5 2163.7L939.9 252.4M123.2 194.6L3402.7 1067.9M-1196.6 2162.2L968.2 256.5M130.2 193.7L3296.9 1019.3M-1019.2 2161.4L982.8 258.6M137.2 192.8L3200.7 975.2M-841.7 2160.7L997.8 260.8M144.1 191.9L3113.0 935.0M-664.3 2159.9L1013.0 263.0M157.6 190.2L2958.7 864.2M-309.4 2158.4L1044.6 267.6M164.2 189.3L2890.5 832.9M-132.0 2157.6L1060.9 269.9M170.7 188.5L2827.3 804.0M45.5 2156.9L1077.6 272.3M177.1 187.6L2768.8 777.1M222.9 2156.1L1094.7 274.8M189.8 186.0L2663.4 728.8M577.8 2154.6L1130.2 279.9M196.0 185.2L2615.8 707.0M755.2 2153.8L1148.6 282.6M202.1 184.4L2571.2 686.5M932.7 2153.0L1167.4 285.3M208.2 183.6L2529.4 667.3M1110.1 2152.3L1186.7 288.1M220.1 182.1L2452.8 632.2M1465.0 2150.7L1226.8 293.9M225.9 181.3L2417.8 616.1M1642.4 2150.0L1247.6 296.9M231.7 180.6L2384.6 600.9M1819.8 2149.2L1269.0 300.0M237.4 179.8L2353.2 586.5M1997.3 2148.4L1290.9 303.2M248.6 178.4L2295.2 559.9M2352.2 2146.9L1336.6 309.8M254.1 177.7L2268.2 547.5M2529.6 2146.1L1360.4 313.2M259.6 177.0L2242.6 535.8M2707.0 2145.4L1384.9 316.8M264.9 176.3L2218.2 524.6M2884.5 2144.6L1410.1 320.4M275.5 174.9L2172.6 503.7M3239.4 2143.1L1462.7 328.0M280.7 174.2L2151.3 493.9M3416.8 2142.3L1490.2 332.0M285.9 173.6L2130.9 484.6M3594.2 2141.6L1518.5 336.1M290.9 172.9L2111.4 475.6M3771.7 2140.8L1547.7 340.3M300.9 171.6L2074.7 458.7M4126.5 2139.3L1608.8 349.2M305.9 171.0L2057.4 450.8M4304.0 2138.5L1640.9 353.8M310.7 170.3L2040.8 443.2M4481.4 2137.7L1674.0 358.6M315.5 169.7L2024.8 435.9M4658.9 2137.0L1708.2 363.6M325.0 168.5L1994.6 422.0M5013.7 2135.4L1780.2 374.0M329.6 167.9L1980.3 415.5M5191.2 2134.7L1818.1 379.4M334.2 167.3L1966.5 409.1M5368.6 2133.9L1857.4 385.1M338.8 166.7L1953.2 403.0M5546.1 2133.1L1898.1 391.0" stroke="#38474c" stroke-opacity="0.16" stroke-width="0.6" fill="none"/><path d="M-1116.5 354.9L-5765.5 2181.9M-1116.5 354.9L343.3 166.1M-962.6 335.0L-4954.5 2178.4M-1179.5 379.7L364.5 169.2M-827.8 317.6L-4143.4 2174.9M-1254.1 409.0L387.0 172.5M-708.9 302.2L-3332.4 2171.4M-1343.8 444.3L410.9 175.9M-603.2 288.5L-2521.3 2167.9M-1454.0 487.6L436.4 179.6M-508.6 276.3L-1710.3 2164.4M-1592.3 541.9L463.6 183.5M-423.5 265.3L-899.2 2160.9M-1771.2 612.2L492.7 187.7M-346.4 255.3L-88.2 2157.4M-2011.6 706.7L523.8 192.2M-276.4 246.3L722.9 2153.9M-2351.7 840.3L557.4 197.1M-212.4 238.0L1533.9 2150.4M-2870.0 1044.0L593.5 202.3M-153.8 230.4L2345.0 2146.9M-3756.1 1392.2L632.5 208.0M-99.8 223.4L3156.1 2143.4M-5616.8 2123.4L674.8 214.1M-50.0 217.0L3967.1 2139.9M-4922.8 2178.3L720.8 220.7M-3.9 211.0L4778.2 2136.5M-4035.6 2174.4L771.0 228.0M38.9 205.5L5589.2 2133.0M-3148.4 2170.6L826.1 236.0M78.8 200.3L4359.1 1506.6M-2261.2 2166.8L886.8 244.7M116.0 195.5L3519.8 1121.6M-1374.0 2163.0L953.9 254.5M150.9 191.0L3032.6 898.1M-486.9 2159.1L1028.6 265.3M183.5 186.8L2714.2 752.1M400.3 2155.3L1112.2 277.3M214.2 182.8L2490.0 649.2M1287.5 2151.5L1206.5 291.0M243.0 179.1L2323.4 572.9M2174.7 2147.7L1313.5 306.5M270.3 175.6L2194.9 513.9M3061.9 2143.8L1436.0 324.2M296.0 172.3L2092.7 467.0M3949.1 2140.0L1577.8 344.7M320.3 169.1L2009.4 428.8M4836.3 2136.2L1743.6 368.7M343.3 166.1L1940.3 397.1M5723.5 2132.4L1940.3 397.1" stroke="#34444a" stroke-opacity="0.26" stroke-width="0.75" fill="none"/></g></g></svg><svg style="left:0px;top:0px" width="1023" height="563" viewBox="0 0 1023 563"><g font-family="Liberation Sans" font-size="6"><text x="101" y="434" fill="#a07878" transform="rotate(-18 101 434)">-10</text><text x="193" y="403" fill="#a07878" transform="rotate(-18 193 403)">-5</text><text x="412" y="440" fill="#7480a8" transform="rotate(25 412 440)">10</text><text x="498" y="480" fill="#7480a8" transform="rotate(25 498 480)">15</text></g><g fill="#4a5a60" opacity="0.7"><ellipse cx="531.5" cy="286" rx="2" ry="1"/><ellipse cx="567.6" cy="273.5" rx="2" ry="1"/><ellipse cx="600.6" cy="262.3" rx="2" ry="1"/><ellipse cx="630.4" cy="252.2" rx="2" ry="1"/><ellipse cx="657.7" cy="242.6" rx="2" ry="1"/><ellipse cx="34.8" cy="257" rx="2" ry="1"/><ellipse cx="59.6" cy="269" rx="2" ry="1"/><ellipse cx="85.7" cy="282" rx="2" ry="1"/></g></svg><svg style="left:615px;top:88px" width="70" height="12" viewBox="0 0 70 12"><circle cx="7.9" cy="6.4" r="3.6" fill="#4a7e8a" stroke="#7aa4ac" stroke-width="0.5"/><rect x="6.2" y="6" width="3.4" height="2.6" fill="#e0e0e0"/><path d="M6.8 6 V5 Q7.9 3.8 9 5 V6" stroke="#e0e0e0" stroke-width="0.6" fill="none"/><rect x="13.4" y="2.5" width="21.9" height="7.4" rx="3.7" fill="#2f6470" stroke="#7fa8b0" stroke-width="0.6"/><rect x="37.2" y="2.5" width="25.8" height="7.4" rx="3.7" fill="#2f6470" stroke="#7fa8b0" stroke-width="0.6"/><circle cx="31.5" cy="6.6" r="0.6" fill="#ddd"/><circle cx="59.2" cy="6.6" r="0.6" fill="#ddd"/></svg><div class="t" style="left:631.90px;top:91.79px;font-size:5.8px;font-family:'Liberation Sans',sans-serif;font-weight:normal;color:#dde6e8;transform:scaleX(0.851);">Persp</div><div class="t" style="left:655.70px;top:91.79px;font-size:5.8px;font-family:'Liberation Sans',sans-serif;font-weight:normal;color:#dde6e8;transform:scaleX(0.841);">No cam</div><div class="t" style="left:646.60px;top:507.96px;font-size:5.6px;font-family:'Liberation Sans',sans-serif;font-weight:normal;color:#dede3a;transform:scaleX(0.925);">Indie Edition</div><svg style="left:22px;top:504px" width="12" height="12" viewBox="0 0 12 12"><path d="M3 9 V3" stroke="#30c030" stroke-width="0.9"/><path d="M3 9 H8" stroke="#d03030" stroke-width="0.9"/><path d="M3 9 L6 7" stroke="#3050e0" stroke-width="0.9"/><text x="1" y="4" font-size="3.5" fill="#30c030" font-family="Liberation Sans">y</text></svg><svg style="left:0;top:0" width="1023" height="563" viewBox="0 0 1023 563"><g clip-path="url(#vpc)"><defs><linearGradient id="wallg" gradientUnits="userSpaceOnUse" x1="0" y1="170" x2="0" y2="355"><stop offset="0" stop-color="#93bfbb"/><stop offset="0.5" stop-color="#8cb9b5"/><stop offset="1" stop-color="#78a9a4"/></linearGradient></defs><path d="M109.4 188.4 L115.0 187.2 L121.0 186.0 L127.0 184.8 L133.0 183.6 L139.0 182.5 L145.0 181.4 L151.0 179.8 L157.0 178.9 L163.0 177.9 L169.0 177.1 L175.0 176.2 L181.0 175.4 L187.0 174.7 L193.0 174.0 L199.0 173.3 L205.0 172.7 L211.0 172.1 L217.0 171.6 L223.0 171.2 L229.0 170.7 L235.0 170.3 L241.0 170.0 L247.0 169.7 L253.0 169.5 L259.0 169.3 L265.0 169.1 L271.0 169.0 L277.0 168.9 L283.0 168.9 L289.0 168.9 L295.0 169.0 L301.0 169.1 L307.0 169.3 L313.0 169.5 L319.0 169.7 L325.0 170.0 L331.0 170.3 L337.0 170.7 L343.0 171.2 L349.0 171.6 L355.0 172.1 L361.0 172.7 L367.0 173.3 L373.0 174.0 L379.0 174.7 L385.0 175.4 L391.0 176.2 L397.0 177.1 L402.3 177.4 L402.3 266.0 L250.0 317.0 L238.6 318.9 L236.8 270.0 L232.8 211.6 L231.0 198.0 L225.0 189.0 L214.2 185.2 L204.0 187.0 L197.0 193.0 L195.5 200.0 L202.2 325.1 L167.5 334.9 L162.2 270.0 L160.5 230.0 L159.0 216.0 L156.5 205.0 L151.0 198.0 L143.0 194.8 L135.0 198.0 L129.5 206.0 L128.0 218.0 L129.0 260.0 L138.2 346.4 L124.9 354.4Z M273.2 270.0 L273.2 200.0 L276.0 190.0 L283.0 184.0 L291.9 182.0 L301.0 184.0 L308.0 189.0 L311.5 196.0 L312.1 270.0Z M352.5 270.0 L352.5 198.0 L356.0 190.0 L362.0 186.5 L369.6 185.2 L377.0 186.5 L383.0 190.0 L386.3 197.0 L386.7 270.0Z" fill="url(#wallg)" fill-rule="evenodd"/><path d="M102.2 190.0 L109.4 188.4 L124.9 354.4 L117.8 353.5Z" fill="#9ecbc6" /><path d="M104 210 L111 209 M106 232 L113 231 M108 254 L115 253 M110 276 L117 275 M112 298 L119 297 M114 320 L121 319 M116 342 L123 341" stroke="#8fbdb8" stroke-width="0.5"/><path d="M402.3 177.4 L408.5 178.0 L408.5 266.0 L402.3 266.0Z" fill="#a6d3ce" /><path d="M143.0 194.8 L151.0 198.0 L156.5 205.0 L159.0 216.0 L160.5 230.0 L162.2 270.0 L167.5 334.9 L162.2 334.9 L156.9 270.0 L155.5 240.0 L153.4 218.0 L147.8 202.0Z" fill="#2db5ac" /><path d="M143.0 194.8 L149.0 196.5 L152.0 199.5 L147.8 202.0Z" fill="#0e3030" /><path d="M214.2 185.2 L225.0 189.0 L231.0 198.0 L232.8 211.6 L236.8 270.0 L238.6 318.9 L236.3 318.9 L234.2 270.0 L229.7 211.6 L226.0 198.0 L221.0 191.0Z" fill="#2db5ac" /><path d="M214.2 185.2 L221.0 187.5 L224.0 190.5 L221.0 191.0Z" fill="#0e3030" /><path d="M273.2 200.0 L276.0 190.0 L283.0 184.0 L291.9 182.0 L287.0 186.0 L280.0 193.0 L277.9 205.0 L277.9 270.0 L273.2 270.0Z" fill="#2db5ac" /><path d="M352.5 198.0 L356.0 190.0 L362.0 186.5 L369.6 185.2 L364.0 189.0 L359.0 195.0 L357.2 202.0 L357.2 270.0 L352.5 270.0Z" fill="#2db8ae" /><path d="M369.6 185.2 L362.0 186.5 L357.0 189.5 L362.0 190.0Z" fill="#0e3030" /><path d="M476.3 279.0 L495.7 279.0 L495.7 280.8 L507.5 280.8 L507.5 286.8 L519.4 286.8 L519.4 292.6 L531.2 292.6 L531.2 298.6 L543.0 298.6 L543.0 304.4 L555.3 304.4 L555.3 310.4 L568.2 310.4 L568.2 316.2 L581.1 316.2 L581.1 322.3 L595.3 322.3 L595.3 329.1 L609.7 329.1 L609.7 335.6 L609.7 339.2 L516.1 382.3 L391.4 344.2 L391.4 329.1 L391.4 329.1 L391.4 323.8 L401.1 323.8 L401.1 318.6 L410.8 318.6 L410.8 313.4 L419.4 313.4 L419.4 308.1 L429.0 308.1 L429.0 302.7 L438.7 302.7 L438.7 297.5 L448.4 297.5 L448.4 292.2 L458.1 292.2 L458.1 287.2 L467.7 287.2 L467.7 281.8 L476.3 281.8Z" fill="#b6b6b6" /><path d="M467.7 287.2L489.2 291.5M458.1 292.2L492.0 300.8M448.4 297.5L495.1 311.5M438.7 302.7L498.5 321.6M429.0 308.1L502.2 332.4M419.4 313.4L505.8 343.1M410.8 318.6L509.2 353.9M401.1 323.8L512.7 366.3M391.4 329.1L516.1 378.6" stroke="#868686" stroke-width="1.5" fill="none"/><path d="M489.2 291.5L507.5 286.8M492.0 300.8L519.4 292.6M495.1 311.5L531.2 298.6M498.5 321.6L543.0 304.4M502.2 332.4L555.3 310.4M505.8 343.1L568.2 316.2M509.2 353.9L581.1 322.3M512.7 366.3L595.3 329.1M516.1 378.6L609.7 335.6" stroke="#9c9c9c" stroke-width="1.1" fill="none"/><path d="M476.3 283.0L487.1 284.5L495.7 282.0M467.7 288.4L489.2 292.7L507.5 288.0M458.1 293.4L492.0 302.0L519.4 293.8M448.4 298.7L495.1 312.7L531.2 299.8M438.7 303.9L498.5 322.8L543.0 305.6M429.0 309.3L502.2 333.6L555.3 311.6M419.4 314.6L505.8 344.3L568.2 317.4M410.8 319.8L509.2 355.1L581.1 323.5M401.1 325.0L512.7 367.5L595.3 330.3M391.4 330.3L516.1 379.8L609.7 336.8" stroke="#c8c8c8" stroke-width="0.9" fill="none"/><path d="M487.1 283.3L487.1 283.3L489.2 291.5L492.0 300.8L495.1 311.5L498.5 321.6L502.2 332.4L505.8 343.1L509.2 353.9L512.7 366.3L516.1 378.6" stroke="#b5b5b5" stroke-width="0.6" fill="none"/><path d="M391.4 341.0 L516.1 378.6 L609.7 335.6 L609.7 339.2 L516.1 382.3 L391.4 344.2Z" fill="#a8a8a8" /><path d="M275.3 279.6 L359.2 257.0 L357.9 346.3 L304.6 364.9 L302.0 284.4Z" fill="#c9b7b7" /><path d="M359.2 257.0 L404.5 267.6 L404.5 356.9 L357.9 346.3Z" fill="#b49e9e" /><path d="M262.0 275.6 L357.9 252.5 L411.2 265.8 L404.5 267.6 L359.2 257.0 L275.3 279.6 L302.0 284.4 L296.6 285.5Z" fill="#b9a9a9" /><path d="M262.0 275.6 L296.6 285.5 L298.0 390.2 L266.0 375.6Z" fill="#bba3a3" /><path d="M296.6 285.5 L302.0 284.4 L304.6 388.9 L298.0 390.2Z" fill="#b9a9a9" /><path d="M404.5 267.6 L411.2 265.8 L409.9 354.2 L404.5 356.9Z" fill="#bcacac" /><path d="M266.9 277.0L270.6 377.7M271.9 278.4L275.1 379.8M276.8 279.8L279.7 381.9M281.8 281.3L284.3 383.9M286.7 282.7L288.9 386.0M291.7 284.1L293.4 388.1M263.0 300.6L297.0 311.7M264.0 325.6L297.3 337.9M265.0 350.6L297.6 364.0M309.1 278.9L311.3 362.6M316.3 275.8L317.9 360.2M323.4 272.6L324.6 357.9M330.6 269.5L331.2 355.6M337.8 266.4L337.9 353.3M344.9 263.2L344.6 350.9M352.1 260.1L351.2 348.6M365.7 258.5L364.6 347.8M372.1 260.0L371.2 349.3M378.6 261.5L377.9 350.8M385.1 263.1L384.5 352.4M391.6 264.6L391.2 353.9M398.0 266.1L397.8 355.4M302.6 302.7L358.9 279.3L404.5 289.9M303.3 323.4L358.5 301.6L404.5 312.2M304.0 344.2L358.2 324.0L404.5 334.6" stroke="#6a5a5a" stroke-opacity="0.6" stroke-width="0.55" fill="none"/><path d="M359.2 257 L357.9 346.3 M302 284.4 L304.6 364.9" stroke="#7a6a6a" stroke-width="0.6" fill="none" stroke-opacity="0.6"/><path d="M302.6 288.2 L358.9 274.7 L404.7 288.8 L404.7 290.5 L322.0 310.5 L302.6 304.6Z" fill="#4b4b4b" /><path d="M302.6 304.6 L322.0 310.5 L404.7 290.5 L404.7 292.9 L322.0 316.9 L302.6 310.5Z" fill="#383838" /><path d="M312 307.5 L381 282 M325 299 L360 288 M330 286 L365 300 M345 283 L383 296 M312 292 L347 304" stroke="#3a3a3a" stroke-width="0.5" fill="none"/><path d="M341.6 371.9 L350.3 375.7 L396.9 357.8 L387.6 354.3Z" fill="#c2c2c2" /><path d="M350.3 372.6 L359.0 376.4 L406.1 358.1 L396.9 354.7Z" fill="#c2c2c2" /><path d="M359.0 373.3 L367.8 377.1 L415.4 358.5 L406.1 355.1Z" fill="#c2c2c2" /><path d="M367.8 374.1 L376.5 377.8 L424.6 358.9 L415.4 355.4Z" fill="#c2c2c2" /><path d="M376.5 374.8 L385.2 378.6 L433.9 359.3 L424.6 355.8Z" fill="#c2c2c2" /><path d="M385.2 375.5 L393.9 379.3 L443.2 359.6 L433.9 356.2Z" fill="#c2c2c2" /><path d="M393.9 376.2 L402.6 380.0 L452.4 360.0 L443.2 356.5Z" fill="#c2c2c2" /><path d="M402.6 376.9 L411.4 380.7 L461.7 360.4 L452.4 356.9Z" fill="#c2c2c2" /><path d="M411.4 377.6 L420.1 381.4 L470.9 360.7 L461.7 357.3Z" fill="#c2c2c2" /><path d="M420.1 378.3 L428.8 382.1 L480.2 361.1 L470.9 357.7Z" fill="#c2c2c2" /><path d="M341.6 375.0 L341.6 371.9 L387.6 354.3 L387.6 357.4Z" fill="#acacac" /><path d="M350.3 375.7 L350.3 372.6 L396.9 354.7 L396.9 357.8Z" fill="#acacac" /><path d="M359.0 376.4 L359.0 373.3 L406.1 355.1 L406.1 358.1Z" fill="#acacac" /><path d="M367.8 377.1 L367.8 374.1 L415.4 355.4 L415.4 358.5Z" fill="#acacac" /><path d="M376.5 377.8 L376.5 374.8 L424.6 355.8 L424.6 358.9Z" fill="#acacac" /><path d="M385.2 378.6 L385.2 375.5 L433.9 356.2 L433.9 359.3Z" fill="#acacac" /><path d="M393.9 379.3 L393.9 376.2 L443.2 356.5 L443.2 359.6Z" fill="#acacac" /><path d="M402.6 380.0 L402.6 376.9 L452.4 356.9 L452.4 360.0Z" fill="#acacac" /><path d="M411.4 380.7 L411.4 377.6 L461.7 357.3 L461.7 360.4Z" fill="#acacac" /><path d="M420.1 381.4 L420.1 378.3 L470.9 357.7 L470.9 360.7Z" fill="#acacac" /><path d="M341.6 375.0 L341.6 371.9 L350.3 375.7 L350.3 372.6 L359.0 376.4 L359.0 373.3 L367.8 377.1 L367.8 374.1 L376.5 377.8 L376.5 374.8 L385.2 378.6 L385.2 375.5 L393.9 379.3 L393.9 376.2 L402.6 380.0 L402.6 376.9 L411.4 380.7 L411.4 377.6 L420.1 381.4 L420.1 378.3 L428.8 382.1 L427.4 412.3Z" fill="#8c8c8c" /><path d="M350.3 375.7L427.4 412.3M359.0 376.4L427.4 412.3M367.8 377.1L427.4 412.3M376.5 377.8L427.4 412.3M385.2 378.6L427.4 412.3M393.9 379.3L427.4 412.3M402.6 380.0L427.4 412.3M411.4 380.7L427.4 412.3M420.1 381.4L427.4 412.3" stroke="#7a7a7a" stroke-width="0.4" fill="none"/><path d="M428.8 382.1 L480.2 361.1 L479.4 392.5 L427.4 412.3Z" fill="#bdbdbd" /></g></svg><div class="b" style="left:681px;top:87px;width:12.8px;height:431px;background:#3a3a3a;"></div><div class="b" style="left:681px;top:87px;width:0.8px;height:431px;background:#2a2a2a;"></div><div class="b" style="left:693.8px;top:48px;width:2.7px;height:470px;background:#474747;"></div><div class="b" style="left:681px;top:87px;width:12.8px;height:3.5px;background:#404040;"></div><svg style="left:688px;top:87.5px" width="4" height="3" viewBox="0 0 4 3"><circle cx="2" cy="1.5" r="1.2" fill="#111"/></svg><div class="b" style="left:682.5px;top:94.5px;width:9.8px;height:9.4px;background:#5c5c5c;"></div><svg style="left:683px;top:94.7px" width="9" height="9" viewBox="0 0 9 9"><path d="M1 3 L4.5 6 L8 3 M1 6 L4.5 3 L8 6" stroke="#ddd" stroke-width="0.8" fill="none"/></svg><svg style="left:683px;top:104.5px" width="9" height="9" viewBox="0 0 9 9"><rect x="1" y="1" width="5" height="5" fill="none" stroke="#9ac050" stroke-width="0.9"/><path d="M3 4 L7 7 L8 5" stroke="#b8d860" stroke-width="0.9" fill="none"/></svg><svg style="left:683px;top:116.0px" width="9" height="9" viewBox="0 0 9 9"><rect x="1.5" y="4" width="6" height="4.5" fill="#e8e8e8"/><path d="M2.8 4 V2.5 Q4.5 0.5 6.2 2.5 V4" stroke="#e8e8e8" stroke-width="0.9" fill="none"/></svg><svg style="left:683px;top:127.5px" width="9" height="9" viewBox="0 0 9 9"><circle cx="4.5" cy="4" r="2.8" fill="#9a9a9a"/><circle cx="3.8" cy="3.5" r="1" fill="#eee"/><rect x="3.5" y="7" width="2" height="1.5" fill="#888"/></svg><svg style="left:683px;top:139.1px" width="9" height="9" viewBox="0 0 9 9"><circle cx="4.5" cy="4.5" r="3.6" fill="#b8b8b8"/><path d="M2 3 Q4 1.5 6 3" stroke="#eee" stroke-width="0.9" fill="none"/></svg><div class="b" style="left:682.5px;top:149.60000000000002px;width:9.8px;height:9.4px;background:#5c5c5c;"></div><svg style="left:683px;top:149.8px" width="9" height="9" viewBox="0 0 9 9"><circle cx="4.5" cy="3.8" r="2.8" fill="#d8d8d8"/><rect x="3.5" y="6.5" width="2" height="2" fill="#aaa"/></svg><svg style="left:683px;top:161.3px" width="9" height="9" viewBox="0 0 9 9"><circle cx="4.5" cy="3.8" r="2.6" fill="none" stroke="#d8d040" stroke-width="1"/><rect x="3.5" y="6.5" width="2" height="2" fill="#aaa"/></svg><svg style="left:683px;top:172.0px" width="9" height="9" viewBox="0 0 9 9"><circle cx="4.5" cy="3.5" r="2.4" fill="none" stroke="#d8d040" stroke-width="1"/><path d="M1 8 H8" stroke="#aaa" stroke-width="0.8"/></svg><div class="b" style="left:682.5px;top:185.10000000000002px;width:9.8px;height:9.4px;background:#5c5c5c;"></div><svg style="left:683px;top:185.3px" width="9" height="9" viewBox="0 0 9 9"><circle cx="4.5" cy="4.5" r="3.2" fill="#222" stroke="#ccc" stroke-width="0.8"/><circle cx="4.5" cy="4.5" r="1.3" fill="#ccc"/></svg><svg style="left:683px;top:195.9px" width="9" height="9" viewBox="0 0 9 9"><path d="M1 2 L5 5 L8 7" stroke="#bbb" stroke-width="0.9"/><circle cx="3" cy="6" r="1.2" fill="#ccc"/></svg><svg style="left:683px;top:207.5px" width="9" height="9" viewBox="0 0 9 9"><circle cx="4" cy="5" r="2.8" fill="#ddd"/><circle cx="7.5" cy="2" r="0.8" fill="#ccc"/><circle cx="8" cy="6" r="0.6" fill="#ccc"/></svg><svg style="left:683px;top:220.8px" width="9" height="9" viewBox="0 0 9 9"><circle cx="4.5" cy="4.5" r="1.1" fill="#e8e8e8"/></svg><svg style="left:683px;top:232.3px" width="9" height="9" viewBox="0 0 9 9"><path d="M1.5 7.5 L7.5 1.5" stroke="#ddd" stroke-width="1"/><circle cx="2" cy="7" r="1.3" fill="#ddd"/></svg><svg style="left:683px;top:243.9px" width="9" height="9" viewBox="0 0 9 9"><path d="M1.5 8 L7 2.5" stroke="#ddd" stroke-width="1"/><circle cx="7" cy="2.5" r="1" fill="#fff"/></svg><svg style="left:683px;top:254.5px" width="9" height="9" viewBox="0 0 9 9"><circle cx="2" cy="7" r="1" fill="#ddd"/><text x="3" y="5" font-size="5" fill="#ddd" font-family="Liberation Sans">12</text></svg><svg style="left:683px;top:267.0px" width="9" height="9" viewBox="0 0 9 9"><path d="M1 7 L5 2 L8 5 L8 8 Z" fill="#d8d8d8"/></svg><svg style="left:683px;top:277.5px" width="9" height="9" viewBox="0 0 9 9"><path d="M1 7 L4 3 L8 4 L8 8 Z" fill="#d8d8d8"/><path d="M3 2 L5 1" stroke="#ccc"/></svg><div class="b" style="left:682.5px;top:288.90000000000003px;width:9.8px;height:9.4px;background:#5c5c5c;"></div><svg style="left:683px;top:289.1px" width="9" height="9" viewBox="0 0 9 9"><path d="M1.5 7.5 Q3 3 7.5 1.5" stroke="#222" stroke-width="1" fill="none"/></svg><svg style="left:683px;top:300.7px" width="9" height="9" viewBox="0 0 9 9"><path d="M1 1 L8 8 M8 1 L1 8" stroke="#aaa" stroke-width="1.2" stroke-dasharray="1 1"/></svg><svg style="left:683px;top:312.2px" width="9" height="9" viewBox="0 0 9 9"><path d="M1 4.5 H4.5 L7.5 1.5 M4.5 4.5 L7.5 7.5" stroke="#ddd" stroke-width="0.9" fill="none"/><circle cx="4.5" cy="4.5" r="1.2" fill="#fff"/></svg><svg style="left:683px;top:323.8px" width="9" height="9" viewBox="0 0 9 9"><rect x="1.5" y="2" width="6" height="5" fill="#ccc"/><path d="M1.5 4.5 H7.5" stroke="#444" stroke-width="0.6"/></svg><div class="t" style="left:682.6px;top:335.5px;font-size:6.2px;color:#d0d0d0;transform:scaleX(0.95)">abc</div><div class="b" style="left:682.5px;top:346.7px;width:9.8px;height:9.4px;border:0.8px solid #bbb;"></div><svg style="left:683px;top:346.9px" width="9" height="9" viewBox="0 0 9 9"><path d="M1.5 3 Q4.5 0.5 7.5 3 V7.5 H1.5Z" fill="#ddd"/></svg><div class="b" style="left:682.5px;top:362.7px;width:9.8px;height:9.4px;background:#5c5c5c;"></div><svg style="left:683px;top:362.9px" width="9" height="9" viewBox="0 0 9 9"><circle cx="4.5" cy="3.8" r="2.6" fill="#e0e0e0"/><path d="M3 6 L4.5 8.5 L6 6" fill="#e0e0e0"/></svg><svg style="left:683px;top:485.0px" width="9" height="9" viewBox="0 0 9 9"><circle cx="4.5" cy="4.5" r="3.6" fill="none" stroke="#ddd" stroke-width="0.8"/><path d="M4.5 3 V7" stroke="#ddd" stroke-width="0.9"/></svg><svg style="left:683px;top:496.0px" width="9" height="9" viewBox="0 0 9 9"><rect x="0.5" y="0.5" width="8" height="8" fill="#d8c030"/><rect x="1.8" y="1.8" width="2.4" height="2.4" fill="#eee"/><rect x="4.8" y="1.8" width="2.4" height="2.4" fill="#eee"/><rect x="1.8" y="4.8" width="2.4" height="2.4" fill="#eee"/><rect x="4.8" y="4.8" width="2.4" height="2.4" fill="#eee"/></svg><svg style="left:683px;top:507.0px" width="9" height="9" viewBox="0 0 9 9"><rect x="0.5" y="0.5" width="8" height="8" fill="#e8e8e8"/><path d="M2 4 Q4.5 2 7 4 L6 6 H3Z" fill="#222"/></svg><div class="b" style="left:696.5px;top:48.5px;width:326.5px;height:9.5px;background:#262626;"></div><div class="b" style="left:696.5px;top:48.6px;width:47.9px;height:9.4px;background:#3a3a3a;"></div><div class="t" style="left:699.10px;top:51.04px;font-size:5.5px;font-family:'Liberation Sans',sans-serif;font-weight:normal;color:#a8a8a8;transform:scaleX(0.798);">svgsBofillCorner1</div><svg style="left:739.8px;top:51.3px" width="4" height="4" viewBox="0 0 4 4"><path d="M0.6 0.6 L3.4 3.4 M3.4 0.6 L0.6 3.4" stroke="#e8e8e8" stroke-width="0.75"/></svg><div class="b" style="left:745.5px;top:48.6px;width:33.4px;height:9.4px;background:#2e2e2e;"></div><div class="t" style="left:749.50px;top:51.04px;font-size:5.5px;font-family:'Liberation Sans',sans-serif;font-weight:normal;color:#a8a8a8;transform:scaleX(0.779);">Take List</div><svg style="left:773.6px;top:51.3px" width="4" height="4" viewBox="0 0 4 4"><path d="M0.6 0.6 L3.4 3.4 M3.4 0.6 L0.6 3.4" stroke="#e8e8e8" stroke-width="0.75"/></svg><div class="b" style="left:780px;top:48.6px;width:54.9px;height:9.4px;background:#2e2e2e;"></div><div class="t" style="left:782.70px;top:51.04px;font-size:5.5px;font-family:'Liberation Sans',sans-serif;font-weight:normal;color:#a8a8a8;transform:scaleX(0.822);">Performance Monitor</div><svg style="left:829.6px;top:51.3px" width="4" height="4" viewBox="0 0 4 4"><path d="M0.6 0.6 L3.4 3.4 M3.4 0.6 L0.6 3.4" stroke="#e8e8e8" stroke-width="0.75"/></svg><svg style="left:837.5px;top:50px" width="6" height="6" viewBox="0 0 6 6"><path d="M3 0.3 V5.7 M0.3 3 H5.7" stroke="#e0e0e0" stroke-width="1.3"/></svg><svg style="left:1007px;top:50.5px" width="16" height="6" viewBox="0 0 16 6"><rect x="1" y="0.5" width="6" height="4.5" fill="#d8d8d8"/><rect x="1" y="0.5" width="6" height="1.2" fill="#999"/><path d="M10.5 2 L13.5 2 L12 4Z" fill="#d8d8d8"/></svg><div class="b" style="left:696.5px;top:58px;width:326.5px;height:13.5px;background:#3a3a3a;"></div><div class="b" style="left:696.5px;top:58px;width:326.5px;height:0.8px;background:#474747;"></div><div class="b" style="left:696.5px;top:70.8px;width:326.5px;height:0.8px;background:#262626;"></div><svg style="left:699px;top:60px" width="22" height="11" viewBox="0 0 22 11"><path d="M0.8 5 L4.8 1.5 V3.6 H8.5 V6.4 H4.8 V8.5Z" fill="#e0e0e0"/><path d="M5.5 8.5 L6.5 10" stroke="#aaa" stroke-width="0.6"/><path d="M20 5 L16 1.5 V3.6 H12.3 V6.4 H16 V8.5Z" fill="#5c5c5c"/></svg><div class="b" style="left:721.5px;top:59.3px;width:277px;height:11.4px;background:#303030;border:0.8px solid #252525;"></div><svg style="left:723.5px;top:61.5px" width="10" height="8" viewBox="0 0 10 8"><rect x="0.3" y="0.3" width="1.5" height="7" fill="#b0b0b0"/><rect x="1.3" y="3" width="6.5" height="4.3" fill="#8a9aa4"/><path d="M2.5 4.6 H6.8 M2.5 6 H5.5" stroke="#d8d8d8" stroke-width="0.5"/></svg><div class="t" style="left:732.90px;top:62.45px;font-size:6.2px;font-family:'Liberation Sans',sans-serif;font-weight:normal;color:#d0d0d0;transform:scaleX(0.846);">obj</div><svg style="left:746.5px;top:60.3px" width="12" height="10" viewBox="0 0 12 10"><path d="M1.3 1.5 L4.3 2.2 L3.5 7.5 L0.5 6.8Z" fill="#3b70d0"/><circle cx="6.6" cy="5" r="2.4" fill="#e03322"/><path d="M2.3 9 L4.6 5.2 L7 9Z" fill="#f2c21c"/></svg><div class="t" style="left:757.30px;top:62.45px;font-size:6.2px;font-family:'Liberation Sans',sans-serif;font-weight:normal;color:#d0d0d0;transform:scaleX(0.725);">geo1</div><svg style="left:993.5px;top:62.5px" width="5" height="5" viewBox="0 0 5 5"><path d="M0.5 1.5 L4 1.5 L2.25 4Z" fill="#9a9a9a"/></svg><svg style="left:1000px;top:59px" width="23" height="13" viewBox="0 0 23 13"><path d="M1.5 6.5 H7.5 M5 3.5 L8 6.5 L5 9.5 M9.3 3 V10" stroke="#e0e0e0" stroke-width="1.2" fill="none"/><circle cx="16.6" cy="6.5" r="4.6" fill="#1f3d78" stroke="#7090d0" stroke-width="0.8"/><circle cx="16.6" cy="6.5" r="2" fill="none" stroke="#90a8d8" stroke-width="0.6"/></svg><div class="b" style="left:696.5px;top:71.5px;width:326.5px;height:14px;background:#383838;"></div><svg style="left:697.8px;top:74px" width="10" height="11" viewBox="0 0 10 11"><rect x="0.5" y="1" width="8.2" height="7.5" rx="1" fill="#e5a030"/><rect x="0.5" y="1" width="8.2" height="2.8" rx="0.8" fill="#f7cb62"/><line x1="0.5" y1="5.6" x2="8.7" y2="5.6" stroke="#a76a14" stroke-width="0.6"/><path d="M6.5 9.5 L8.5 9.5 L7.5 10.5Z" fill="#aaa"/></svg><div class="t" style="left:707.90px;top:76.17px;font-size:6.3px;font-family:'Liberation Sans',sans-serif;font-weight:bold;color:#dcdcdc;transform:scaleX(0.766);">svgsBofillCorner</div><div class="b" style="left:748.5px;top:74.7px;width:219px;height:8.3px;background:#141414;"></div><div class="t" style="left:750.70px;top:76.72px;font-size:6.4px;font-family:'Liberation Mono',monospace;font-weight:normal;color:#e0e0e0;transform:scaleX(0.839);">svgsBofillCorner1</div><svg style="left:967px;top:72.5px" width="56" height="12" viewBox="0 0 56 12"><g stroke="#e8e8e8" stroke-width="1.1"><path d="M5.7 2 V10 M1.7 6 H9.7 M2.9 3.2 L8.5 8.8 M8.5 3.2 L2.9 8.8"/></g><circle cx="5.7" cy="6" r="2" fill="#e8e8e8"/><path d="M9 10.5 H11" stroke="#ccc" stroke-width="0.6"/><rect x="12.5" y="1.5" width="7.5" height="9" fill="#1a2a48" stroke="#6a90d8" stroke-width="0.7"/><path d="M14.5 2.5 V9.5 M18 2.5 V9.5 M14.5 6 H18" stroke="#e8e8e8" stroke-width="1.1"/><circle cx="26.5" cy="5.5" r="3.3" fill="none" stroke="#e0e0e0" stroke-width="1"/><path d="M29 8 L31.5 10.5" stroke="#e0e0e0" stroke-width="1.2"/><circle cx="38.8" cy="6" r="4.3" fill="none" stroke="#e0e0e0" stroke-width="0.9"/><path d="M38.8 4.8 V8.6" stroke="#e0e0e0" stroke-width="1.1"/><circle cx="38.8" cy="3.4" r="0.6" fill="#e0e0e0"/><circle cx="49.6" cy="6" r="4.3" fill="none" stroke="#e0e0e0" stroke-width="0.9"/><path d="M48.2 4.7 Q48.3 3.2 49.6 3.2 Q51 3.2 51 4.5 Q51 5.5 49.6 6.2 V7.2" stroke="#e0e0e0" stroke-width="0.8" fill="none"/><circle cx="49.6" cy="8.6" r="0.55" fill="#e0e0e0"/></svg><div class="b" style="left:696.5px;top:85.5px;width:326.5px;height:196px;background:#3a3a3a;"></div><div class="t" style="left:728.40px;top:88.95px;font-size:6.2px;font-family:'Liberation Sans',sans-serif;font-weight:normal;color:#c4c4c4;transform:scaleX(0.805);">leg1Length</div><div class="b" style="left:758.9px;top:87.2px;width:44.9px;height:9.5px;background:#151515;"></div><div class="t" style="left:759.90px;top:89.50px;font-size:6.3px;font-family:'Liberation Mono',monospace;font-weight:bold;color:#f0f0f0;transform:scaleX(0.866);">2.29</div><div class="b" style="left:805.2px;top:91.30000000000001px;width:49.59999999999991px;height:1.2px;background:#2a5796;"></div><div class="b" style="left:854.8px;top:91.2px;width:166.20000000000005px;height:1.4px;background:#1a1a1a;"></div><div class="b" style="left:854.0999999999999px;top:86.60000000000001px;width:1.4px;height:9.5px;background:#9a9a9a;"></div><div class="t" style="left:728.40px;top:99.98px;font-size:6.2px;font-family:'Liberation Sans',sans-serif;font-weight:normal;color:#c4c4c4;transform:scaleX(0.805);">leg2Length</div><div class="b" style="left:758.9px;top:98.23px;width:44.9px;height:9.5px;background:#151515;"></div><div class="t" style="left:759.90px;top:100.53px;font-size:6.3px;font-family:'Liberation Mono',monospace;font-weight:bold;color:#f0f0f0;transform:scaleX(0.866);">6.23</div><div class="b" style="left:805.2px;top:102.33000000000001px;width:134.79999999999995px;height:1.2px;background:#2a5796;"></div><div class="b" style="left:940px;top:102.23px;width:81px;height:1.4px;background:#1a1a1a;"></div><div class="b" style="left:939.3px;top:97.63000000000001px;width:1.4px;height:9.5px;background:#9a9a9a;"></div><div class="t" style="left:728.40px;top:111.01px;font-size:6.2px;font-family:'Liberation Sans',sans-serif;font-weight:normal;color:#c4c4c4;transform:scaleX(0.805);">leg3Length</div><div class="b" style="left:758.9px;top:109.26px;width:44.9px;height:9.5px;background:#151515;"></div><div class="t" style="left:759.90px;top:111.56px;font-size:6.3px;font-family:'Liberation Mono',monospace;font-weight:normal;color:#b8b8b8;transform:scaleX(0.866);">3.79</div><div class="b" style="left:805.2px;top:113.36000000000001px;width:81.79999999999995px;height:1.2px;background:#2a5796;"></div><div class="b" style="left:887px;top:113.26px;width:134px;height:1.4px;background:#1a1a1a;"></div><div class="b" style="left:886.3px;top:108.66000000000001px;width:1.4px;height:9.5px;background:#9a9a9a;"></div><div class="t" style="left:738.80px;top:122.04px;font-size:6.2px;font-family:'Liberation Sans',sans-serif;font-weight:normal;color:#c4c4c4;transform:scaleX(0.847);">height</div><div class="b" style="left:758.9px;top:120.28999999999999px;width:44.9px;height:9.5px;background:#151515;"></div><div class="t" style="left:759.90px;top:122.59px;font-size:6.3px;font-family:'Liberation Mono',monospace;font-weight:normal;color:#b8b8b8;transform:scaleX(0.866);">5.89</div><div class="b" style="left:805.2px;top:124.39px;width:127.5px;height:1.2px;background:#2a5796;"></div><div class="b" style="left:932.7px;top:124.28999999999999px;width:88.29999999999995px;height:1.4px;background:#1a1a1a;"></div><div class="b" style="left:932.0px;top:119.69px;width:1.4px;height:9.5px;background:#9a9a9a;"></div><div class="t" style="left:730.70px;top:133.07px;font-size:6.2px;font-family:'Liberation Sans',sans-serif;font-weight:normal;color:#c4c4c4;transform:scaleX(0.823);">wallDepth</div><div class="b" style="left:758.9px;top:131.32px;width:44.9px;height:9.5px;background:#151515;"></div><div class="t" style="left:759.90px;top:133.62px;font-size:6.3px;font-family:'Liberation Mono',monospace;font-weight:normal;color:#b8b8b8;transform:scaleX(0.866);">0.57</div><div class="b" style="left:805.2px;top:135.42px;width:12.299999999999955px;height:1.2px;background:#2a5796;"></div><div class="b" style="left:817.5px;top:135.32px;width:203.5px;height:1.4px;background:#1a1a1a;"></div><div class="b" style="left:816.8px;top:130.72px;width:1.4px;height:9.5px;background:#9a9a9a;"></div><div class="t" style="left:742.70px;top:144.10px;font-size:6.2px;font-family:'Liberation Sans',sans-serif;font-weight:normal;color:#c4c4c4;transform:scaleX(0.862);">floor</div><div class="b" style="left:758.9px;top:141.15px;width:21px;height:9.7px;background:#4a4a4a;"></div><div class="t" style="left:765.10px;top:144.44px;font-size:5.8px;font-family:'Liberation Sans',sans-serif;font-weight:normal;color:#d0d0d0;transform:scaleX(0.888);">Yes</div><svg style="left:778.5px;top:142.04999999999998px" width="4" height="8" viewBox="0 0 4 8"><path d="M0.5 2.5 L2 0.7 L3.5 2.5 M0.5 5 L2 6.8 L3.5 5" stroke="#aaa" stroke-width="0.7" fill="none"/></svg><div class="t" style="left:728.10px;top:155.13px;font-size:6.2px;font-family:'Liberation Sans',sans-serif;font-weight:normal;color:#c4c4c4;transform:scaleX(0.834);">floorHeight</div><div class="b" style="left:758.9px;top:153.38px;width:44.9px;height:9.5px;background:#151515;"></div><div class="t" style="left:759.90px;top:155.68px;font-size:6.3px;font-family:'Liberation Mono',monospace;font-weight:normal;color:#b8b8b8;transform:scaleX(0.866);">0.32</div><div class="b" style="left:805.2px;top:157.48px;width:7.099999999999909px;height:1.2px;background:#2a5796;"></div><div class="b" style="left:812.3px;top:157.38px;width:208.70000000000005px;height:1.4px;background:#1a1a1a;"></div><div class="b" style="left:811.5999999999999px;top:152.78px;width:1.4px;height:9.5px;background:#9a9a9a;"></div><div class="t" style="left:714.40px;top:166.16px;font-size:6.2px;font-family:'Liberation Sans',sans-serif;font-weight:normal;color:#c4c4c4;transform:scaleX(0.834);">floorHeightOffset</div><div class="b" style="left:758.9px;top:164.41px;width:44.9px;height:9.5px;background:#151515;"></div><div class="t" style="left:759.90px;top:166.71px;font-size:6.3px;font-family:'Liberation Mono',monospace;font-weight:bold;color:#f0f0f0;transform:scaleX(0.866);">4.71</div><div class="b" style="left:805.2px;top:168.51px;width:101.39999999999998px;height:1.2px;background:#2a5796;"></div><div class="b" style="left:906.6px;top:168.41px;width:114.39999999999998px;height:1.4px;background:#1a1a1a;"></div><div class="b" style="left:905.9px;top:163.81px;width:1.4px;height:9.5px;background:#9a9a9a;"></div><div class="b" style="left:696.5px;top:281.8px;width:326.5px;height:3.5px;background:#434343;"></div><div class="b" style="left:696.5px;top:285.3px;width:326.5px;height:9.2px;background:#262626;"></div><div class="b" style="left:696.5px;top:285.4px;width:33.9px;height:9.1px;background:#3a3a3a;"></div><div class="t" style="left:699.10px;top:287.74px;font-size:5.5px;font-family:'Liberation Sans',sans-serif;font-weight:normal;color:#a8a8a8;transform:scaleX(0.862);">/obj/geo1</div><svg style="left:725.4px;top:288px" width="4" height="4" viewBox="0 0 4 4"><path d="M0.6 0.6 L3.4 3.4 M3.4 0.6 L0.6 3.4" stroke="#e8e8e8" stroke-width="0.75"/></svg><div class="b" style="left:731.5px;top:285.4px;width:33.9px;height:9.1px;background:#2e2e2e;"></div><div class="t" style="left:734.60px;top:287.74px;font-size:5.5px;font-family:'Liberation Sans',sans-serif;font-weight:normal;color:#a8a8a8;transform:scaleX(0.797);">Tree View</div><svg style="left:760.4px;top:288px" width="4" height="4" viewBox="0 0 4 4"><path d="M0.6 0.6 L3.4 3.4 M3.4 0.6 L0.6 3.4" stroke="#e8e8e8" stroke-width="0.75"/></svg><div class="b" style="left:766.5px;top:285.4px;width:45.9px;height:9.1px;background:#2e2e2e;"></div><div class="t" style="left:769.80px;top:287.74px;font-size:5.5px;font-family:'Liberation Sans',sans-serif;font-weight:normal;color:#a8a8a8;transform:scaleX(0.851);">Material Palette</div><svg style="left:807.1px;top:288px" width="4" height="4" viewBox="0 0 4 4"><path d="M0.6 0.6 L3.4 3.4 M3.4 0.6 L0.6 3.4" stroke="#e8e8e8" stroke-width="0.75"/></svg><div class="b" style="left:813.5px;top:285.4px;width:41.9px;height:9.1px;background:#2e2e2e;"></div><div class="t" style="left:816.30px;top:287.74px;font-size:5.5px;font-family:'Liberation Sans',sans-serif;font-weight:normal;color:#a8a8a8;transform:scaleX(0.818);">Asset Browser</div><svg style="left:850.5px;top:288px" width="4" height="4" viewBox="0 0 4 4"><path d="M0.6 0.6 L3.4 3.4 M3.4 0.6 L0.6 3.4" stroke="#e8e8e8" stroke-width="0.75"/></svg><svg style="left:859px;top:287px" width="6" height="6" viewBox="0 0 6 6"><path d="M3 0.3 V5.7 M0.3 3 H5.7" stroke="#e0e0e0" stroke-width="1.3"/></svg><svg style="left:1007px;top:287.3px" width="16" height="6" viewBox="0 0 16 6"><rect x="1" y="0.5" width="6" height="4.5" fill="#d8d8d8"/><rect x="1" y="0.5" width="6" height="1.2" fill="#999"/><path d="M10.5 2 L13.5 2 L12 4Z" fill="#d8d8d8"/></svg><div class="b" style="left:696.5px;top:294.5px;width:326.5px;height:13.4px;background:#3a3a3a;"></div><div class="b" style="left:696.5px;top:294.5px;width:326.5px;height:0.8px;background:#474747;"></div><div class="b" style="left:696.5px;top:307.1px;width:326.5px;height:0.8px;background:#262626;"></div><svg style="left:699px;top:296.3px" width="22" height="11" viewBox="0 0 22 11"><path d="M0.8 5 L4.8 1.5 V3.6 H8.5 V6.4 H4.8 V8.5Z" fill="#e0e0e0"/><path d="M5.5 8.5 L6.5 10" stroke="#aaa" stroke-width="0.6"/><path d="M20 5 L16 1.5 V3.6 H12.3 V6.4 H16 V8.5Z" fill="#5c5c5c"/></svg><div class="b" style="left:721.5px;top:295.6px;width:277px;height:11.4px;background:#303030;border:0.8px solid #252525;"></div><svg style="left:723.5px;top:297.8px" width="10" height="8" viewBox="0 0 10 8"><rect x="0.3" y="0.3" width="1.5" height="7" fill="#b0b0b0"/><rect x="1.3" y="3" width="6.5" height="4.3" fill="#8a9aa4"/><path d="M2.5 4.6 H6.8 M2.5 6 H5.5" stroke="#d8d8d8" stroke-width="0.5"/></svg><div class="t" style="left:733.00px;top:298.85px;font-size:6.2px;font-family:'Liberation Sans',sans-serif;font-weight:normal;color:#d0d0d0;transform:scaleX(0.822);">obj</div><svg style="left:746.5px;top:296.6px" width="12" height="10" viewBox="0 0 12 10"><path d="M1.3 1.5 L4.3 2.2 L3.5 7.5 L0.5 6.8Z" fill="#3b70d0"/><circle cx="6.6" cy="5" r="2.4" fill="#e03322"/><path d="M2.3 9 L4.6 5.2 L7 9Z" fill="#f2c21c"/></svg><div class="t" style="left:756.70px;top:298.85px;font-size:6.2px;font-family:'Liberation Sans',sans-serif;font-weight:normal;color:#d0d0d0;transform:scaleX(0.783);">geo1</div><svg style="left:993.5px;top:299px" width="5" height="5" viewBox="0 0 5 5"><path d="M0.5 1.5 L4 1.5 L2.25 4Z" fill="#9a9a9a"/></svg><svg style="left:1000px;top:295.3px" width="23" height="13" viewBox="0 0 23 13"><path d="M1.5 6.5 H7.5 M5 3.5 L8 6.5 L5 9.5 M9.3 3 V10" stroke="#e0e0e0" stroke-width="1.2" fill="none"/><circle cx="16.6" cy="6.5" r="4.6" fill="#1f3d78" stroke="#7090d0" stroke-width="0.8"/><circle cx="16.6" cy="6.5" r="2" fill="none" stroke="#90a8d8" stroke-width="0.6"/></svg><div class="b" style="left:696.5px;top:307.9px;width:326.5px;height:13.5px;background:#3a3a3a;"></div><svg style="left:697px;top:309px" width="4" height="3" viewBox="0 0 4 3"><path d="M0.5 2.5 L2 0.3 L3.5 2.5Z" fill="#111"/></svg><div class="b" style="left:696.5px;top:312px;width:4px;height:9px;background:#333;"></div><div class="t" style="left:704.60px;top:313.17px;font-size:6.3px;font-family:'Liberation Sans',sans-serif;font-weight:normal;color:#c8c8c8;transform:scaleX(0.874);">Add</div><div class="t" style="left:720.90px;top:313.17px;font-size:6.3px;font-family:'Liberation Sans',sans-serif;font-weight:normal;color:#c8c8c8;transform:scaleX(0.903);">Edit</div><div class="t" style="left:737.90px;top:313.17px;font-size:6.3px;font-family:'Liberation Sans',sans-serif;font-weight:normal;color:#c8c8c8;transform:scaleX(0.809);">Go</div><div class="t" style="left:751.80px;top:313.17px;font-size:6.3px;font-family:'Liberation Sans',sans-serif;font-weight:normal;color:#c8c8c8;transform:scaleX(0.842);">View</div><div class="t" style="left:770.70px;top:313.17px;font-size:6.3px;font-family:'Liberation Sans',sans-serif;font-weight:normal;color:#c8c8c8;transform:scaleX(0.932);">Tools</div><div class="t" style="left:790.90px;top:313.17px;font-size:6.3px;font-family:'Liberation Sans',sans-serif;font-weight:normal;color:#c8c8c8;transform:scaleX(0.894);">Layout</div><div class="t" style="left:814.70px;top:313.17px;font-size:6.3px;font-family:'Liberation Sans',sans-serif;font-weight:normal;color:#c8c8c8;transform:scaleX(0.926);">Help</div><svg style="left:880.5px;top:311.6px" width="9" height="9" viewBox="0 0 9 9"><path d="M1 8 L6 3 M3 1 L8 6 M1.5 1.5 L3 3" stroke="#e0e0e0" stroke-width="1.2"/><circle cx="7" cy="2" r="1.3" fill="none" stroke="#e0e0e0" stroke-width="0.9"/></svg><svg style="left:891.7px;top:311.6px" width="9" height="9" viewBox="0 0 9 9"><path d="M2 1 V8 H8 M2 3.5 H7 M2 6 H7" stroke="#cfcfcf" stroke-width="0.9" fill="none"/></svg><svg style="left:902.1px;top:311.6px" width="9" height="9" viewBox="0 0 9 9"><rect x="1.5" y="0.5" width="6" height="8" fill="#e0e0e0"/></svg><svg style="left:920.8px;top:311.6px" width="9" height="9" viewBox="0 0 9 9"><g><rect x="1.0" y="1.0" width="1.8" height="1.8" fill="#e04040"/><rect x="3.4" y="1.0" width="1.8" height="1.8" fill="#40c040"/><rect x="5.8" y="1.0" width="1.8" height="1.8" fill="#4060e0"/><rect x="1.0" y="3.4" width="1.8" height="1.8" fill="#e0e040"/><rect x="3.4" y="3.4" width="1.8" height="1.8" fill="#e080e0"/><rect x="5.8" y="3.4" width="1.8" height="1.8" fill="#40e0e0"/><rect x="1.0" y="5.8" width="1.8" height="1.8" fill="#f08030"/><rect x="3.4" y="5.8" width="1.8" height="1.8" fill="#a0a0a0"/><rect x="5.8" y="5.8" width="1.8" height="1.8" fill="#ffffff"/></g></svg><svg style="left:932.1px;top:311.6px" width="9" height="9" viewBox="0 0 9 9"><rect x="0.5" y="0.5" width="8" height="8" fill="none" stroke="#bbb" stroke-width="0.7"/><path d="M4.5 1 V8 M1 3 H8 M1 6 H8" stroke="#999" stroke-width="0.6"/></svg><svg style="left:950.0px;top:311.6px" width="9" height="9" viewBox="0 0 9 9"><rect x="0.5" y="0.5" width="8" height="8" fill="#d8d8d8"/><rect x="2" y="2" width="3" height="3" fill="#444"/><rect x="4" y="4" width="3" height="3" fill="#666"/></svg><svg style="left:961.2px;top:311.6px" width="9" height="9" viewBox="0 0 9 9"><rect x="0.5" y="0.5" width="8" height="8" fill="#e0e0e0"/><path d="M2 3 H6 M2 5 H5" stroke="#555" stroke-width="0.7"/><path d="M5 8 L8 4" stroke="#555" stroke-width="0.9"/></svg><svg style="left:972.0px;top:311.6px" width="9" height="9" viewBox="0 0 9 9"><rect x="0.5" y="0.5" width="8" height="8" fill="#3a90d8"/><path d="M0.5 8.5 L4 4 L8.5 8.5Z" fill="#70b050"/><circle cx="6" cy="3" r="1.2" fill="#f0e040"/></svg><svg style="left:983.4px;top:311.6px" width="9" height="9" viewBox="0 0 9 9"><rect x="0.5" y="1.5" width="8" height="6.5" rx="1" fill="#e5a030"/><rect x="0.5" y="1.5" width="8" height="2.5" fill="#f7cb62"/></svg><svg style="left:1001.5px;top:311.6px" width="9" height="9" viewBox="0 0 9 9"><circle cx="3.8" cy="3.8" r="2.8" fill="none" stroke="#d8d8d8" stroke-width="0.9"/><path d="M5.8 5.8 L8.5 8.5" stroke="#d8d8d8" stroke-width="1.2"/></svg><svg style="left:1012.8px;top:311.6px" width="9" height="9" viewBox="0 0 9 9"><rect x="0.5" y="0.5" width="8" height="8" fill="#e8e8e8"/><path d="M2 3 H7 L4.5 6Z" fill="#222"/><path d="M2 7 H7" stroke="#222" stroke-width="0.8"/></svg><div class="b" style="left:696.5px;top:321.4px;width:326.5px;height:196.6px;background:#303030;"></div><div class="b" style="left:696.5px;top:321.4px;width:326.5px;height:0.8px;background:#2c2c2c;"></div><div class="t" style="left:833.90px;top:329.60px;font-size:8.5px;font-family:'Liberation Sans',sans-serif;font-weight:normal;color:#404040;transform:scaleX(1.077);">Indie Edition</div><div class="t" style="left:966.70px;top:331.06px;font-size:9.5px;font-family:'Liberation Sans',sans-serif;font-weight:bold;color:#4a4a4a;transform:scaleX(1.159);">Geometry</div><svg style="left:0px;top:0px" width="1023" height="563" viewBox="0 0 1023 563"><g fill="none" stroke-width="0.9"><path d="M749.8 371 C752 378 790 400 808 418" stroke="#4f6f8e"/><path d="M814.3 371 C814 390 812 405 812.5 416" stroke="#8a8a5a"/><path d="M884.5 393 C884 400 850 408 818 417" stroke="#4f6f8e"/><path d="M944.5 405 C944 414 930 415 900 415 L820 416.5" stroke="#4f6f8e"/><path d="M884.5 371 V385" stroke="#4f6f8e"/><path d="M944.5 371 V397.5" stroke="#4f6f8e"/></g></svg><div class="b" style="left:738.4px;top:363.3px;width:22.8px;height:7.2px;background:#d8d8d8;border-radius:1px;"></div><svg style="left:738.4px;top:363.3px" width="22.8" height="7.2" viewBox="0 0 22.8 7.2"><path d="M2.5 0.5 V6.7 M4.5 0.5 V6.7 M17.8 0.5 V6.7 M20 0.5 V6.7" stroke="#a8a8a8" stroke-width="0.5"/><rect x="9" y="1.8" width="4.5" height="3.6" rx="0.5" fill="#e5a030"/></svg><div class="b" style="left:749.0px;top:370.5px;width:1.6px;height:1.3px;background:#d8d8d8;"></div><svg style="left:762.9999999999999px;top:371.0px" width="4" height="4" viewBox="0 0 4 4"><path d="M0.5 0.5 L2 3.5 L3.5 0.5" fill="none" stroke="#bbb" stroke-width="0.6"/></svg><div class="b" style="left:802px;top:362.3px;width:24.8px;height:9.2px;background:#e8c040;"></div><div class="b" style="left:803px;top:363.3px;width:22.8px;height:7.2px;background:#d8d8d8;border-radius:1px;"></div><svg style="left:803px;top:363.3px" width="22.8" height="7.2" viewBox="0 0 22.8 7.2"><path d="M2.5 0.5 V6.7 M4.5 0.5 V6.7 M17.8 0.5 V6.7 M20 0.5 V6.7" stroke="#a8a8a8" stroke-width="0.5"/><rect x="9" y="1.8" width="4.5" height="3.6" rx="0.5" fill="#e5a030"/></svg><div class="b" style="left:813.6px;top:370.5px;width:1.6px;height:1.3px;background:#d8d8d8;"></div><svg style="left:827.5999999999999px;top:371.0px" width="4" height="4" viewBox="0 0 4 4"><path d="M0.5 0.5 L2 3.5 L3.5 0.5" fill="none" stroke="#bbb" stroke-width="0.6"/></svg><div class="b" style="left:873.1px;top:363.3px;width:22.8px;height:7.2px;background:#d8d8d8;border-radius:1px;"></div><svg style="left:873.1px;top:363.3px" width="22.8" height="7.2" viewBox="0 0 22.8 7.2"><path d="M2.5 0.5 V6.7 M4.5 0.5 V6.7 M17.8 0.5 V6.7 M20 0.5 V6.7" stroke="#a8a8a8" stroke-width="0.5"/><rect x="9" y="1.8" width="4.5" height="3.6" rx="0.5" fill="#e5a030"/></svg><div class="b" style="left:883.7px;top:370.5px;width:1.6px;height:1.3px;background:#d8d8d8;"></div><svg style="left:897.6999999999999px;top:371.0px" width="4" height="4" viewBox="0 0 4 4"><path d="M0.5 0.5 L2 3.5 L3.5 0.5" fill="none" stroke="#bbb" stroke-width="0.6"/></svg><div class="b" style="left:933.3px;top:363.3px;width:22.8px;height:7.2px;background:#d8d8d8;border-radius:1px;"></div><svg style="left:933.3px;top:363.3px" width="22.8" height="7.2" viewBox="0 0 22.8 7.2"><path d="M2.5 0.5 V6.7 M4.5 0.5 V6.7 M17.8 0.5 V6.7 M20 0.5 V6.7" stroke="#a8a8a8" stroke-width="0.5"/><rect x="9" y="1.8" width="4.5" height="3.6" rx="0.5" fill="#e5a030"/></svg><div class="b" style="left:943.9px;top:370.5px;width:1.6px;height:1.3px;background:#d8d8d8;"></div><svg style="left:957.8999999999999px;top:371.0px" width="4" height="4" viewBox="0 0 4 4"><path d="M0.5 0.5 L2 3.5 L3.5 0.5" fill="none" stroke="#bbb" stroke-width="0.6"/></svg><div class="b" style="left:873.1px;top:385.1px;width:22.8px;height:7.2px;background:#d8d8d8;border-radius:1px;"></div><svg style="left:873.1px;top:385.1px" width="22.8" height="7.2" viewBox="0 0 22.8 7.2"><path d="M2.5 0.5 V6.7 M4.5 0.5 V6.7 M17.8 0.5 V6.7 M20 0.5 V6.7" stroke="#a8a8a8" stroke-width="0.5"/><text x="9" y="5.8" font-size="4.5" fill="#4060a0" font-family="Liberation Sans">&#8605;</text></svg><div class="b" style="left:883.7px;top:392.3px;width:1.6px;height:1.3px;background:#d8d8d8;"></div><div class="b" style="left:933.3px;top:397.5px;width:22.8px;height:7.2px;background:#d8d8d8;border-radius:1px;"></div><svg style="left:933.3px;top:397.5px" width="22.8" height="7.2" viewBox="0 0 22.8 7.2"><path d="M2.5 0.5 V6.7 M4.5 0.5 V6.7 M17.8 0.5 V6.7 M20 0.5 V6.7" stroke="#a8a8a8" stroke-width="0.5"/><text x="9" y="5.8" font-size="4.5" fill="#4060a0" font-family="Liberation Sans">&#8605;</text></svg><div class="b" style="left:943.9px;top:404.7px;width:1.6px;height:1.3px;background:#d8d8d8;"></div><div class="t" style="left:763.20px;top:364.56px;font-size:5.6px;font-family:'Liberation Sans',sans-serif;font-weight:normal;color:#c0c0c0;transform:scaleX(0.822);">svgsArcWall1</div><div class="t" style="left:828.30px;top:364.56px;font-size:5.6px;font-family:'Liberation Sans',sans-serif;font-weight:normal;color:#c0c0c0;transform:scaleX(0.855);">svgsBofillCorner1</div><div class="t" style="left:898.30px;top:364.56px;font-size:5.6px;font-family:'Liberation Sans',sans-serif;font-weight:normal;color:#c0c0c0;transform:scaleX(0.812);">svgsSteps1</div><div class="t" style="left:958.60px;top:364.56px;font-size:5.6px;font-family:'Liberation Sans',sans-serif;font-weight:normal;color:#c0c0c0;transform:scaleX(0.849);">svgsBofillStepsCorner1</div><div class="t" style="left:898.30px;top:386.26px;font-size:5.6px;font-family:'Liberation Sans',sans-serif;font-weight:normal;color:#c0c0c0;transform:scaleX(0.852);">transform1</div><div class="t" style="left:958.60px;top:398.56px;font-size:5.6px;font-family:'Liberation Sans',sans-serif;font-weight:normal;color:#c0c0c0;transform:scaleX(0.874);">transform2</div><div class="t" style="left:828.30px;top:424.36px;font-size:5.6px;font-family:'Liberation Sans',sans-serif;font-weight:normal;color:#c0c0c0;transform:scaleX(0.827);">merge1</div><svg style="left:801px;top:414px" width="28" height="27" viewBox="0 0 28 27"><circle cx="13.4" cy="12.8" r="11.3" fill="#5a7fb8"/><circle cx="13.4" cy="12.8" r="9" fill="#7a9ad0"/><rect x="2.5" y="9" width="22" height="7.5" rx="1" fill="#d8d8d8"/><path d="M5 9 V16.5 M7 9 V16.5 M20 9 V16.5 M22 9 V16.5" stroke="#a8a8a8" stroke-width="0.5"/><rect x="5" y="16.5" width="17" height="2.6" fill="#a070c0"/><rect x="6" y="6" width="15" height="2.6" fill="#c8b0d8"/><path d="M11 11 L13.5 13 L16 11 M13.5 13 V15" stroke="#c03030" stroke-width="0.8" fill="none"/><rect x="23.5" y="9.5" width="2.5" height="6" fill="#30a0f0"/></svg><svg style="left:826.5px;top:430.5px" width="5" height="5" viewBox="0 0 5 5"><circle cx="2.5" cy="2.5" r="2" fill="#e8b020"/><path d="M2.5 1.3 V3" stroke="#333" stroke-width="0.7"/></svg><div class="b" style="left:0px;top:518px;width:1023px;height:31.3px;background:#2d2d2d;"></div><div class="b" style="left:0px;top:518px;width:1023px;height:0.8px;background:#262626;"></div><div class="b" style="left:0px;top:536.4px;width:1023px;height:0.6px;background:#292929;"></div><div class="b" style="left:0px;top:518px;width:4.5px;height:31.3px;background:#383838;"></div><svg style="left:1px;top:546px" width="3" height="3" viewBox="0 0 3 3"><circle cx="1.5" cy="1.5" r="1" fill="#111"/></svg><div class="b" style="left:5.9px;top:522.1px;width:96px;height:12.9px;background:#3c3c3c;"></div><div class="b" style="left:6.300000000000001px;top:522.3px;width:11.9px;height:12.5px;background:#454545;"></div><div class="b" style="left:19.0px;top:522.3px;width:10.899999999999999px;height:12.5px;background:#454545;"></div><div class="b" style="left:31.7px;top:522.3px;width:10.5px;height:12.5px;background:#454545;"></div><div class="b" style="left:43.4px;top:522.3px;width:10.900000000000002px;height:12.5px;background:#454545;"></div><div class="b" style="left:55.5px;top:522.3px;width:10.599999999999998px;height:12.5px;background:#454545;"></div><div class="b" style="left:31.3px;top:522.1px;width:11.3px;height:12.9px;background:#6a7880;"></div><svg style="left:5.9px;top:522.1px" width="62" height="13" viewBox="0 0 62 13"><path d="M3.5 3.5 V9.5" stroke="#e0e0e0" stroke-width="1.1"/><path d="M4.5 6.5 L8 3.5 V9.5Z M8 6.5 L11.5 3.5 V9.5Z" fill="#e0e0e0"/><path d="M16.5 6.5 L21.5 3 V10Z" fill="#e0e0e0"/><rect x="28.5" y="3.5" width="6" height="6" fill="#e8e8e8"/><path d="M45 6.5 L40 3 V10Z" fill="#e0e0e0"/><path d="M54.5 6.5 L51 3.5 V9.5Z M58 6.5 L54.5 3.5 V9.5Z" fill="#e0e0e0"/><path d="M58.5 3.5 V9.5" stroke="#e0e0e0" stroke-width="1.1"/></svg><div class="b" style="left:67.4px;top:522.1px;width:22.6px;height:12.9px;background:#1b1b1b;"></div><div class="t" style="left:69.40px;top:526.25px;font-size:6.2px;font-family:'Liberation Sans',sans-serif;font-weight:normal;color:#d8d8d8;transform:scaleX(0.609);">1</div><div class="b" style="left:90.3px;top:522.1px;width:11.4px;height:12.9px;background:#4a4a4a;"></div><svg style="left:90.3px;top:522.1px" width="12" height="13" viewBox="0 0 12 13"><path d="M2 5 V8 M3 6.5 L5 5 V8Z" stroke="#ccc" stroke-width="0.7" fill="#ccc"/><path d="M10 6.5 L7 5 V8Z" fill="#ccc"/></svg><div class="b" style="left:103.6px;top:518.8px;width:806px;height:16.4px;background:#2a2a2a;"></div><svg style="left:0px;top:0px" width="1023" height="563" viewBox="0 0 1023 563"><path d="M104 528.6 H910" stroke="#5e5e5e" stroke-width="0.7"/><path d="M103.8 526.8V530.4M107.2 526.8V530.4M110.6 526.8V530.4M113.9 526.8V530.4M117.3 526.8V530.4M120.7 526.8V530.4M124.0 526.8V530.4M127.4 526.8V530.4M130.8 526.8V530.4M134.1 526.8V530.4M137.5 526.8V530.4M140.9 526.8V530.4M144.2 526.8V530.4M147.6 526.8V530.4M151.0 526.8V530.4M154.3 526.8V530.4M157.7 526.8V530.4M161.1 526.8V530.4M164.5 526.8V530.4M167.8 526.8V530.4M171.2 526.8V530.4M174.6 526.8V530.4M177.9 526.8V530.4M181.3 526.8V530.4M184.7 526.8V530.4M188.0 526.8V530.4M191.4 526.8V530.4M194.8 526.8V530.4M198.1 526.8V530.4M201.5 526.8V530.4M204.9 526.8V530.4M208.3 526.8V530.4M211.6 526.8V530.4M215.0 526.8V530.4M218.4 526.8V530.4M221.7 526.8V530.4M225.1 526.8V530.4M228.5 526.8V530.4M231.8 526.8V530.4M235.2 526.8V530.4M238.6 526.8V530.4M241.9 526.8V530.4M245.3 526.8V530.4M248.7 526.8V530.4M252.0 526.8V530.4M255.4 526.8V530.4M258.8 526.8V530.4M262.2 526.8V530.4M265.5 526.8V530.4M268.9 526.8V530.4M272.3 526.8V530.4M275.6 526.8V530.4M279.0 526.8V530.4M282.4 526.8V530.4M285.7 526.8V530.4M289.1 526.8V530.4M292.5 526.8V530.4M295.8 526.8V530.4M299.2 526.8V530.4M302.6 526.8V530.4M306.0 526.8V530.4M309.3 526.8V530.4M312.7 526.8V530.4M316.1 526.8V530.4M319.4 526.8V530.4M322.8 526.8V530.4M326.2 526.8V530.4M329.5 526.8V530.4M332.9 526.8V530.4M336.3 526.8V530.4M339.6 526.8V530.4M343.0 526.8V530.4M346.4 526.8V530.4M349.8 526.8V530.4M353.1 526.8V530.4M356.5 526.8V530.4M359.9 526.8V530.4M363.2 526.8V530.4M366.6 526.8V530.4M370.0 526.8V530.4M373.3 526.8V530.4M376.7 526.8V530.4M380.1 526.8V530.4M383.4 526.8V530.4M386.8 526.8V530.4M390.2 526.8V530.4M393.5 526.8V530.4M396.9 526.8V530.4M400.3 526.8V530.4M403.7 526.8V530.4M407.0 526.8V530.4M410.4 526.8V530.4M413.8 526.8V530.4M417.1 526.8V530.4M420.5 526.8V530.4M423.9 526.8V530.4M427.2 526.8V530.4M430.6 526.8V530.4M434.0 526.8V530.4M437.3 526.8V530.4M440.7 526.8V530.4M444.1 526.8V530.4M447.5 526.8V530.4M450.8 526.8V530.4M454.2 526.8V530.4M457.6 526.8V530.4M460.9 526.8V530.4M464.3 526.8V530.4M467.7 526.8V530.4M471.0 526.8V530.4M474.4 526.8V530.4M477.8 526.8V530.4M481.1 526.8V530.4M484.5 526.8V530.4M487.9 526.8V530.4M491.2 526.8V530.4M494.6 526.8V530.4M498.0 526.8V530.4M501.4 526.8V530.4M504.7 526.8V530.4M508.1 526.8V530.4M511.5 526.8V530.4M514.8 526.8V530.4M518.2 526.8V530.4M521.6 526.8V530.4M524.9 526.8V530.4M528.3 526.8V530.4M531.7 526.8V530.4M535.0 526.8V530.4M538.4 526.8V530.4M541.8 526.8V530.4M545.2 526.8V530.4M548.5 526.8V530.4M551.9 526.8V530.4M555.3 526.8V530.4M558.6 526.8V530.4M562.0 526.8V530.4M565.4 526.8V530.4M568.7 526.8V530.4M572.1 526.8V530.4M575.5 526.8V530.4M578.8 526.8V530.4M582.2 526.8V530.4M585.6 526.8V530.4M588.9 526.8V530.4M592.3 526.8V530.4M595.7 526.8V530.4M599.1 526.8V530.4M602.4 526.8V530.4M605.8 526.8V530.4M609.2 526.8V530.4M612.5 526.8V530.4M615.9 526.8V530.4M619.3 526.8V530.4M622.6 526.8V530.4M626.0 526.8V530.4M629.4 526.8V530.4M632.7 526.8V530.4M636.1 526.8V530.4M639.5 526.8V530.4M642.9 526.8V530.4M646.2 526.8V530.4M649.6 526.8V530.4M653.0 526.8V530.4M656.3 526.8V530.4M659.7 526.8V530.4M663.1 526.8V530.4M666.4 526.8V530.4M669.8 526.8V530.4M673.2 526.8V530.4M676.5 526.8V530.4M679.9 526.8V530.4M683.3 526.8V530.4M686.7 526.8V530.4M690.0 526.8V530.4M693.4 526.8V530.4M696.8 526.8V530.4M700.1 526.8V530.4M703.5 526.8V530.4M706.9 526.8V530.4M710.2 526.8V530.4M713.6 526.8V530.4M717.0 526.8V530.4M720.3 526.8V530.4M723.7 526.8V530.4M727.1 526.8V530.4M730.4 526.8V530.4M733.8 526.8V530.4M737.2 526.8V530.4M740.6 526.8V530.4M743.9 526.8V530.4M747.3 526.8V530.4M750.7 526.8V530.4M754.0 526.8V530.4M757.4 526.8V530.4M760.8 526.8V530.4M764.1 526.8V530.4M767.5 526.8V530.4M770.9 526.8V530.4M774.2 526.8V530.4M777.6 526.8V530.4M781.0 526.8V530.4M784.4 526.8V530.4M787.7 526.8V530.4M791.1 526.8V530.4M794.5 526.8V530.4M797.8 526.8V530.4M801.2 526.8V530.4M804.6 526.8V530.4M807.9 526.8V530.4M811.3 526.8V530.4M814.7 526.8V530.4M818.0 526.8V530.4M821.4 526.8V530.4M824.8 526.8V530.4M828.1 526.8V530.4M831.5 526.8V530.4M834.9 526.8V530.4M838.3 526.8V530.4M841.6 526.8V530.4M845.0 526.8V530.4M848.4 526.8V530.4M851.7 526.8V530.4M855.1 526.8V530.4M858.5 526.8V530.4M861.8 526.8V530.4M865.2 526.8V530.4M868.6 526.8V530.4M871.9 526.8V530.4M875.3 526.8V530.4M878.7 526.8V530.4M882.1 526.8V530.4M885.4 526.8V530.4M888.8 526.8V530.4M892.2 526.8V530.4M895.5 526.8V530.4M898.9 526.8V530.4M902.3 526.8V530.4M905.6 526.8V530.4M909.0 526.8V530.4" stroke="#8c8c8c" stroke-width="0.6"/><path d="M181.3 525.5V531.5M262.2 525.5V531.5M343.0 525.5V531.5M423.9 525.5V531.5M504.7 525.5V531.5M585.6 525.5V531.5M666.4 525.5V531.5M747.3 525.5V531.5M828.1 525.5V531.5M909.0 525.5V531.5" stroke="#b8b8b8" stroke-width="0.7"/></svg><div class="t" style="left:182.00px;top:519.44px;font-size:4.8px;font-family:'Liberation Sans',sans-serif;font-weight:normal;color:#a0a0a0;transform:scaleX(0.899);">24</div><div class="t" style="left:262.86px;top:519.44px;font-size:4.8px;font-family:'Liberation Sans',sans-serif;font-weight:normal;color:#a0a0a0;transform:scaleX(0.899);">48</div><div class="t" style="left:343.71px;top:519.44px;font-size:4.8px;font-family:'Liberation Sans',sans-serif;font-weight:normal;color:#a0a0a0;transform:scaleX(0.899);">72</div><div class="t" style="left:424.57px;top:519.44px;font-size:4.8px;font-family:'Liberation Sans',sans-serif;font-weight:normal;color:#a0a0a0;transform:scaleX(0.899);">96</div><div class="t" style="left:505.42px;top:519.44px;font-size:4.8px;font-family:'Liberation Sans',sans-serif;font-weight:normal;color:#a0a0a0;transform:scaleX(0.899);">120</div><div class="t" style="left:586.28px;top:519.44px;font-size:4.8px;font-family:'Liberation Sans',sans-serif;font-weight:normal;color:#a0a0a0;transform:scaleX(0.899);">144</div><div class="t" style="left:667.14px;top:519.44px;font-size:4.8px;font-family:'Liberation Sans',sans-serif;font-weight:normal;color:#a0a0a0;transform:scaleX(0.899);">168</div><div class="t" style="left:747.99px;top:519.44px;font-size:4.8px;font-family:'Liberation Sans',sans-serif;font-weight:normal;color:#a0a0a0;transform:scaleX(0.899);">192</div><div class="t" style="left:828.85px;top:519.44px;font-size:4.8px;font-family:'Liberation Sans',sans-serif;font-weight:normal;color:#a0a0a0;transform:scaleX(0.899);">216</div><div class="t" style="left:907.80px;top:519.44px;font-size:4.8px;font-family:'Liberation Sans',sans-serif;font-weight:normal;color:#a0a0a0;transform:scaleX(0.899);">2</div><div class="b" style="left:103.9px;top:518.9px;width:10.8px;height:6.4px;background:#101010;border:0.7px solid #bdbdbd;"></div><div class="b" style="left:109px;top:518.9px;width:0.8px;height:6.4px;background:#777;"></div><svg style="left:103px;top:524.5px" width="4" height="4" viewBox="0 0 4 4"><path d="M0.5 3.5 L3 1" stroke="#bbb" stroke-width="0.6"/></svg><div class="b" style="left:7.8px;top:537.6px;width:10.4px;height:10.2px;background:#454545;"></div><svg style="left:8.5px;top:538.2px" width="9" height="9" viewBox="0 0 9 9"><rect x="1" y="1.5" width="5" height="5" fill="#e0e0e0"/><rect x="3" y="3.5" width="5" height="5" fill="#bbb"/></svg><div class="b" style="left:19.8px;top:537.6px;width:10.4px;height:10.2px;background:#454545;"></div><svg style="left:20.5px;top:538.2px" width="9" height="9" viewBox="0 0 9 9"><path d="M4.5 1 V8 M2 2.5 Q1 4.5 2 6.5 M7 2.5 Q8 4.5 7 6.5" stroke="#ddd" stroke-width="0.9" fill="none"/></svg><div class="b" style="left:31.3px;top:537.6px;width:10.4px;height:10.2px;background:#454545;"></div><svg style="left:32.0px;top:538.2px" width="9" height="9" viewBox="0 0 9 9"><path d="M1.5 6 Q1.5 2 4.5 2 Q7.5 2 7.5 5 H1.5" stroke="#ddd" stroke-width="0.9" fill="none"/><path d="M1 7.5 H8" stroke="#ddd" stroke-width="0.8"/></svg><div class="b" style="left:43.099999999999994px;top:537.6px;width:10.4px;height:10.2px;background:#454545;"></div><svg style="left:43.8px;top:538.2px" width="9" height="9" viewBox="0 0 9 9"><circle cx="4.5" cy="4.5" r="3.6" fill="none" stroke="#ddd" stroke-width="0.8"/><path d="M6 3.3 Q4.5 2.3 3.4 3.5 Q2.6 4.5 3.4 5.6 Q4.5 6.7 6 5.7" stroke="#ddd" stroke-width="0.8" fill="none"/></svg><svg style="left:56.5px;top:538.2px" width="9" height="9" viewBox="0 0 9 9"><path d="M2 2 V7 M7.5 2 L3.5 4.5 L7.5 7Z" stroke="#36503a" fill="#36503a" stroke-width="0.7"/></svg><svg style="left:67.5px;top:538.2px" width="9" height="9" viewBox="0 0 9 9"><path d="M7 2 V7 M1.5 2 L5.5 4.5 L1.5 7Z" stroke="#36503a" fill="#36503a" stroke-width="0.7"/></svg><div class="b" style="left:103.6px;top:537.6px;width:20.5px;height:10.5px;background:#2a2a2a;"></div><div class="t" style="left:105.00px;top:540.25px;font-size:6.2px;font-family:'Liberation Sans',sans-serif;font-weight:normal;color:#d8d8d8;transform:scaleX(0.580);">1</div><div class="b" style="left:124.7px;top:537.6px;width:19px;height:10.5px;background:#1d1d1d;"></div><div class="t" style="left:126.00px;top:540.25px;font-size:6.2px;font-family:'Liberation Sans',sans-serif;font-weight:normal;color:#d8d8d8;transform:scaleX(0.580);">1</div><div class="b" style="left:146px;top:542.4px;width:722.5px;height:0.8px;background:#262626;"></div><div class="b" style="left:146px;top:543.2px;width:722.5px;height:1.3px;background:#7c7c7c;"></div><div class="b" style="left:146px;top:544.5px;width:722.5px;height:0.6px;background:#262626;"></div><svg style="left:144px;top:539.3px" width="5" height="8" viewBox="0 0 5 8"><path d="M4 4 L0.5 0.5 V7.5Z" fill="#e0e0e0"/></svg><svg style="left:868px;top:539.5px" width="4" height="8" viewBox="0 0 4 8"><path d="M3.5 4 L0.5 0.5 V7.5Z" fill="#d8d8d8"/></svg><div class="b" style="left:871.8px;top:538.8px;width:18px;height:9px;background:#171717;"></div><div class="t" style="left:873.00px;top:541.22px;font-size:6px;font-family:'Liberation Sans',sans-serif;font-weight:normal;color:#e0e0e0;transform:scaleX(1.099);">240</div><div class="b" style="left:891px;top:538.8px;width:19.4px;height:9px;background:#1d1d1d;"></div><div class="t" style="left:892.50px;top:541.22px;font-size:6px;font-family:'Liberation Sans',sans-serif;font-weight:normal;color:#d0d0d0;transform:scaleX(1.099);">240</div><svg style="left:913px;top:524px" width="30" height="20" viewBox="0 0 30 20"><circle cx="8" cy="9" r="6.5" fill="#333"/><path d="M5 12 L9 8 M8 6 A2 2 0 1 1 10 8" stroke="#6a6a6a" stroke-width="1" fill="none"/><path d="M17.5 8 L20.5 8 L19 10Z" fill="#bbb"/></svg><svg style="left:939.6px;top:521.8px" width="10" height="10" viewBox="0 0 10 10"><rect x="0.5" y="0.5" width="8.5" height="8.5" fill="#222" stroke="#888" stroke-width="0.5"/><path d="M1.5 6 L3 3 L4.5 7 L6 2 L8 5" stroke="#e04040" stroke-width="0.7" fill="none"/><path d="M1.5 4 H8" stroke="#40a0e0" stroke-width="0.6"/></svg><svg style="left:939.6px;top:535.3px" width="10" height="10" viewBox="0 0 10 10"><rect x="0.5" y="0.5" width="8.5" height="8.5" fill="#222" stroke="#888" stroke-width="0.5"/><path d="M1.5 6 Q3 1 5 5 T8 3" stroke="#e0c030" stroke-width="0.8" fill="none"/><path d="M1.5 5 H8" stroke="#4070e0" stroke-width="0.6"/></svg><div class="b" style="left:951.5px;top:522.9px;width:69.5px;height:10.3px;background:#454545;"></div><div class="t" style="left:959.50px;top:525.99px;font-size:5.8px;font-family:'Liberation Sans',sans-serif;font-weight:normal;color:#c8c8c8;transform:scaleX(0.842);">0 keys, 0/0 channels</div><svg style="left:1013.5px;top:526px" width="5" height="5" viewBox="0 0 5 5"><path d="M0.5 3 L2.5 0.8 L4.5 3" fill="#aaa"/></svg><div class="b" style="left:951.5px;top:535px;width:69.5px;height:9.5px;background:#454545;"></div><div class="t" style="left:957.70px;top:537.89px;font-size:5.8px;font-family:'Liberation Sans',sans-serif;font-weight:normal;color:#c8c8c8;transform:scaleX(0.851);">Key All Channels</div><svg style="left:1016px;top:536.5px" width="4" height="7" viewBox="0 0 4 7"><path d="M0.5 2.5 L2 0.7 L3.5 2.5 M0.5 4.5 L2 6.3 L3.5 4.5" stroke="#aaa" stroke-width="0.6" fill="none"/></svg><div class="b" style="left:0px;top:549.3px;width:1023px;height:11.7px;background:#1e1e1e;"></div><div class="b" style="left:0px;top:561px;width:1023px;height:2px;background:#2a3844;"></div><div class="b" style="left:102.6px;top:561px;width:17.6px;height:2px;background:#d07a30;"></div><div class="b" style="left:120.2px;top:561px;width:16.7px;height:2px;background:#6a7a84;"></div><svg style="left:951px;top:550.5px" width="22" height="10" viewBox="0 0 22 10"><ellipse cx="5.5" cy="4.5" rx="4.5" ry="3.3" fill="#d8d8d8"/><circle cx="8" cy="7.5" r="1" fill="#d8d8d8"/><path d="M14 3 A3 3 0 1 1 13.5 7" stroke="#777" stroke-width="0.9" fill="none"/></svg><div class="b" style="left:976px;top:551px;width:39.8px;height:9px;background:#3a3a3a;"></div><div class="t" style="left:983.00px;top:553.56px;font-size:5.6px;font-family:'Liberation Sans',sans-serif;font-weight:normal;color:#d0d0d0;transform:scaleX(0.851);">Auto Update</div><svg style="left:1017.5px;top:551.5px" width="4" height="8" viewBox="0 0 4 8"><path d="M0.5 2.5 L2 0.7 L3.5 2.5 M0.5 5 L2 6.8 L3.5 5" stroke="#aaa" stroke-width="0.6" fill="none"/></svg></body></html>
